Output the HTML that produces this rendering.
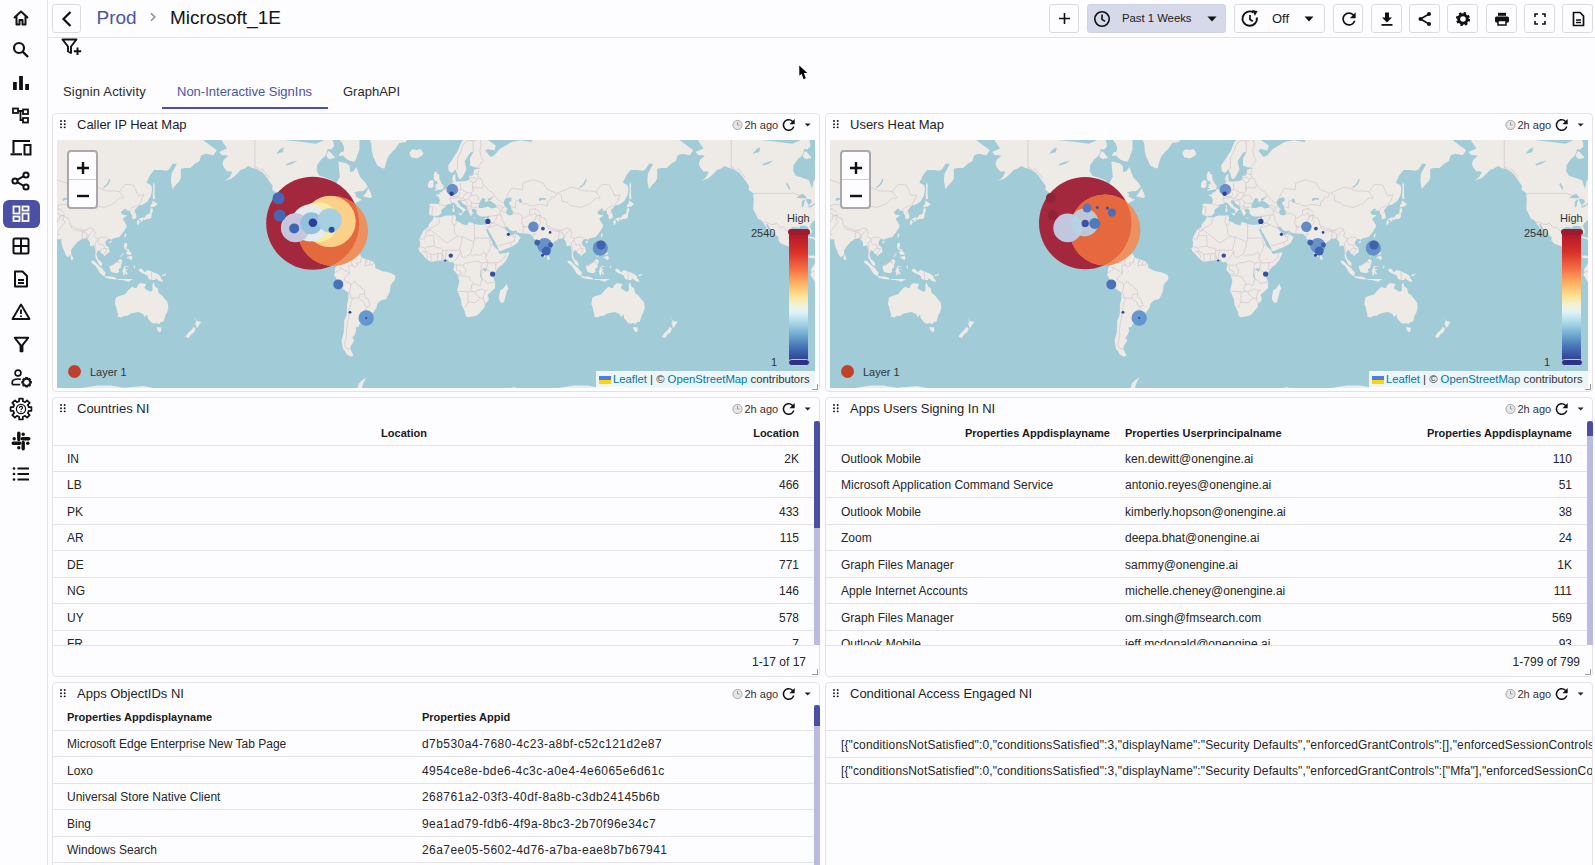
<!DOCTYPE html>
<html><head><meta charset="utf-8">
<style>
*{box-sizing:border-box;margin:0;padding:0}
html,body{width:1595px;height:865px;overflow:hidden;background:#fdfcfe;font-family:"Liberation Sans",sans-serif;color:#1f1f1f}
.a{position:absolute}
.side{left:0;top:0;width:48px;height:865px;border-right:1px solid #e4e3e8;background:#fdfcfe}
.side svg{position:absolute;left:11px;width:20px;height:20px}
.top{left:48px;top:0;width:1547px;height:38px;border-bottom:1px solid #e2e1e6}
.btn{position:absolute;top:4px;height:29px;border:1px solid #dcdbe0;border-radius:3px;background:#fdfcfe}
.btn svg{position:absolute}
.panel{position:absolute;border:1px solid #e3e2e7;border-radius:4px;background:#fdfcff;overflow:hidden}
.ptitle{position:absolute;left:24px;top:6px;font-size:13px;color:#1f1f1f;white-space:nowrap}
.grip{position:absolute;left:8px;top:8px;width:6px;height:9px}
.ago{position:absolute;top:5px;font-size:11px;color:#333;white-space:nowrap}
.map{position:absolute;background:#a2cbd8;overflow:hidden}
.t{position:absolute;font-size:12px;white-space:nowrap;color:#262626}
.th{position:absolute;font-size:11px;font-weight:bold;white-space:nowrap;color:#1a1a1a}
.hl{position:absolute;height:1px;background:#e3e3e6}
</style></head><body>
<svg width="0" height="0" style="position:absolute">
<defs>
<g id="world">
<rect x="0" y="0" width="758" height="248" fill="#a2cbd8"/>
<path d="M-99.3,76.9L-100.2,75.6L-103.7,75.2L-104.5,72.2L-103.5,66.6L-104.2,64.9L-102.5,63.6L-94.3,64.1L-93.5,59.9L-94.8,57.0L-98.3,54.8L-94.0,54.2L-93.6,52.0L-91.6,52.4L-89.8,49.5L-86.6,48.2L-85.5,45.0L-82.6,43.9L-80.5,43.0L-81.2,39.3L-80.5,35.5L-78.0,34.0L-78.0,37.7L-77.5,41.4L-74.0,41.6L-67.4,40.9L-64.1,39.8L-64.1,35.7L-60.8,35.7L-59.5,32.0L-59.5,29.7L-52.2,28.1L-58.8,27.3L-63.4,25.5L-63.4,18.3L-59.5,11.2L-63.4,12.8L-68.7,21.3L-67.0,29.5L-70.1,35.7L-73.0,39.3L-75.0,38.1L-76.3,33.3L-78.0,29.5L-81.3,33.0L-84.6,31.3L-85.3,25.5L-81.3,19.8L-75.4,10.6L-72.0,2.0L-66.8,-3.6L-60.1,-7.5L-53.5,-5.5L-48.2,-1.7L-37.6,5.6L-39.0,10.6L-45.6,8.9L-48.2,10.6L-42.9,16.9L-39.0,15.3L-33.7,8.9L-21.8,2.0L-12.5,0.2L-1.9,2.0L4.7,-11.7L14.0,-16.1L40.4,-36.7L93.4,-11.7L119.8,-1.7L133.1,-3.6L146.3,0.2L159.9,10.3L156.2,15.3L148.9,13.8L144.3,15.3L142.3,21.3L138.4,23.2L133.1,28.1L127.8,28.1L123.8,28.7L123.8,38.1L122.5,40.9L117.8,46.1L115.5,49.3L113.9,40.5L114.5,33.8L119.8,24.1L115.9,23.5L111.9,29.5L109.2,30.8L104.0,30.0L97.3,30.0L93.4,34.5L89.4,42.8L94.0,45.0L95.1,49.3L94.0,55.4L90.7,61.2L86.8,63.9L84.1,65.2L82.6,64.7L79.9,67.5L77.5,70.5L79.5,76.1L79.2,78.2L76.2,79.3L75.2,78.5L75.2,75.2L73.5,73.6L73.5,71.0L68.9,70.2L68.9,71.9L69.8,69.3L68.2,68.6L64.3,71.5L64.0,72.7L65.6,74.7L70.2,75.2L66.9,77.7L65.8,79.3L68.0,82.5L69.4,84.8L69.5,87.1L67.6,90.1L66.2,92.3L64.3,94.5L62.3,96.9L59.0,97.7L56.3,98.6L54.3,99.6L53.7,100.6L53.3,98.9L51.0,98.9L49.0,101.0L48.1,103.1L49.7,105.9L51.7,107.2L52.6,112.0L49.7,114.0L47.1,116.6L46.8,114.3L44.4,113.4L43.7,111.7L41.5,110.0L40.4,111.3L39.4,114.7L40.8,118.7L42.4,120.3L44.9,122.7L45.1,126.3L42.0,124.6L40.8,122.0L38.4,117.4L38.2,110.6L37.4,106.5L36.5,105.3L33.2,106.5L32.8,101.7L30.5,99.6L29.8,98.1L27.2,98.4L24.6,98.7L23.0,100.4L20.6,101.7L16.9,105.9L14.2,110.0L14.2,114.3L12.6,115.8L10.7,117.2L8.7,114.7L7.0,110.6L5.4,106.5L4.4,102.4L4.4,98.9L3.4,99.3L1.4,99.6L-0.6,97.7L0.7,96.9L-1.6,95.8L-3.2,94.1L-7.2,93.4L-10.5,93.5L-15.8,92.6L-17.1,90.6L-20.4,91.3L-23.7,89.7L-25.7,87.1L-27.7,86.4L-28.4,87.1L-27.7,89.4L-25.7,91.6L-24.7,94.1L-23.6,92.6L-23.1,95.3L-19.8,94.8L-17.8,92.3L-17.4,91.8L-17.1,94.5L-14.5,95.8L-12.8,97.4L-14.5,100.3L-15.4,102.4L-19.1,105.2L-23.1,107.2L-28.4,109.3L-32.3,110.9L-34.6,111.1L-35.3,107.9L-38.3,101.7L-40.3,98.9L-41.6,96.0L-43.6,93.1L-45.6,89.4L-45.6,87.1L-46.6,89.4L-47.2,90.1L-48.9,86.4L-49.2,84.4L-46.5,84.4L-45.6,82.0L-44.9,80.4L-44.4,77.2L-44.3,75.6L-46.9,76.4L-49.6,76.5L-52.2,76.4L-54.8,75.6L-55.8,74.4L-57.1,72.7L-56.4,71.0L-57.2,70.0L-58.8,68.6L-61.5,69.3L-61.7,71.0L-60.1,73.6L-61.5,74.2L-62.1,76.1L-63.3,75.4L-63.8,73.6L-65.2,71.0L-66.1,69.3L-66.2,67.0L-67.4,65.8L-69.4,64.3L-71.4,63.0L-72.0,61.2L-73.8,60.0L-75.6,60.6L-75.4,62.7L-73.6,64.5L-72.7,66.6L-70.7,67.5L-68.1,69.1L-67.4,69.8L-69.4,71.5L-70.1,72.7L-71.1,73.6L-71.1,70.2L-73.1,68.8L-75.8,67.0L-78.0,63.9L-80.1,62.3L-82.2,63.6L-85.3,64.3L-87.7,64.9L-87.7,67.0L-90.8,68.8L-92.3,71.0L-91.6,72.4L-93.2,74.2L-94.8,75.7L-97.7,75.7L-99.3,76.9ZM13.7,115.0L14.6,115.1L16.3,118.0L16.0,119.8L14.2,120.0L13.7,117.4ZM68.2,93.4L69.5,93.8L68.2,98.1L67.2,96.7ZM51.8,102.1L54.3,100.8L55.0,101.5L53.0,103.5ZM79.9,80.9L81.5,80.1L82.8,81.7L81.5,84.8L80.1,84.4ZM83.4,81.7L84.1,80.1L86.2,79.8L85.7,81.2ZM81.3,79.6L84.1,80.3L86.8,79.1L87.4,80.6L89.1,79.1L91.8,79.1L93.1,78.5L94.4,77.4L94.6,74.4L94.7,73.1L96.0,71.0L95.2,67.7L93.4,68.9L93.2,71.0L92.7,73.6L90.1,74.7L89.1,74.9L88.1,77.4L84.1,77.7L82.3,78.8ZM93.4,67.5L94.8,67.0L97.7,66.6L100.6,64.3L99.3,63.0L95.6,60.4L95.1,64.3L93.8,64.5ZM96.0,59.3L98.0,58.9L97.5,53.4L97.7,45.0L96.8,42.1L96.0,45.0L96.3,49.3L95.7,54.4ZM67.6,103.1L69.8,103.1L70.2,105.9L68.9,108.6L72.2,109.6L72.2,111.2L70.2,110.4L67.7,109.0L66.9,106.1ZM69.5,118.7L71.5,117.8L72.2,118.7L74.2,120.2L75.5,118.3L74.8,115.4L74.2,116.0L71.5,116.4L70.2,117.4ZM69.5,111.3L72.9,111.3L74.8,113.4L73.5,114.7L70.2,114.7L69.3,112.7ZM63.2,117.0L66.2,112.8L66.6,114.0L63.6,117.4ZM52.3,126.0L53.1,129.3L54.1,132.0L59.6,133.3L62.3,132.0L61.6,129.3L64.3,126.9L64.0,124.7L65.6,121.1L62.9,118.7L60.9,121.4L57.6,123.8L55.0,125.6ZM34.2,120.6L37.1,121.1L41.0,125.1L45.5,128.7L46.4,130.4L48.4,132.0L48.1,135.7L46.4,135.8L43.1,133.3L40.8,129.2L38.4,125.8L34.5,122.8ZM47.3,137.0L49.0,136.0L51.4,136.4L55.0,136.5L57.4,137.3L59.6,138.4L59.6,139.6L53.7,138.9L49.0,137.8ZM60.3,139.0L65.6,138.9L72.2,138.9L76.2,139.0L73.5,140.6L71.5,141.8L65.6,140.0L61.6,140.0ZM66.2,135.3L67.6,135.4L67.6,131.7L68.9,134.4L71.1,134.0L69.5,132.0L68.6,130.4L71.5,129.3L68.2,129.2L68.2,127.3L73.1,126.0L67.6,126.3L66.6,128.0L65.3,131.7L66.0,132.6ZM76.8,125.6L78.1,126.0L77.5,129.1L76.8,128.0ZM81.5,130.0L83.4,128.5L85.4,129.2L87.4,132.2L90.7,130.1L94.7,131.4L100.6,134.1L103.3,136.0L104.0,138.6L106.6,141.7L102.6,141.3L98.7,138.2L98.0,140.0L94.7,140.1L91.8,138.9L90.1,135.3L85.4,133.3L82.8,131.7ZM104.6,135.3L109.2,133.6L108.6,135.3L105.3,136.2ZM96.7,142.2L95.4,144.7L95.5,150.8L93.4,151.7L92.7,151.5L88.1,148.8L87.4,147.8L89.1,144.3L89.0,144.0L83.4,143.1L82.1,144.3L81.2,144.5L79.5,148.1L77.5,148.1L75.5,146.7L74.2,147.4L71.5,150.1L69.5,152.2L68.2,154.3L65.6,155.0L62.3,156.0L59.0,157.6L58.3,161.5L57.9,163.9L59.0,166.6L60.3,172.0L61.2,174.8L60.4,176.5L64.3,177.5L66.9,175.9L70.9,175.7L72.2,174.3L74.8,173.2L81.5,172.0L86.1,174.0L87.8,177.2L90.1,174.3L90.7,178.3L92.7,180.6L94.7,182.9L98.0,183.8L99.3,182.8L101.8,184.3L104.0,182.1L106.6,181.6L108.3,175.6L109.9,172.7L111.4,167.5L110.6,162.2L107.3,158.6L105.3,155.7L101.7,152.9L100.6,148.1L98.0,146.7L96.7,142.2ZM99.5,187.1L104.4,187.4L104.0,191.5L102.4,192.2L100.2,189.7ZM136.6,176.5L139.4,180.4L140.9,181.3L144.3,181.9L142.3,184.6L141.3,186.7L139.4,188.1L139.2,185.5L138.1,184.5L139.2,181.1ZM136.6,186.7L138.6,188.8L137.0,192.6L134.4,193.9L131.7,197.9L128.4,196.7L131.1,193.0L134.7,189.4ZM-330.1,365.4L-330.1,298.8L-303.6,292.7L-290.4,287.0L-277.2,281.7L-263.9,276.8L-224.2,272.1L-191.1,272.1L-184.5,267.7L-173.9,267.7L-171.3,281.7L-151.4,298.8L-131.6,287.0L-111.8,267.7L-91.9,259.6L-72.0,259.6L-52.2,257.7L-39.0,255.8L-25.7,248.7L-19.1,247.1L-12.5,250.4L0.7,252.2L7.4,257.7L20.6,248.7L40.4,245.4L53.7,245.4L66.9,247.7L86.8,246.1L100.0,248.7L119.8,259.6L133.1,265.6L146.3,298.8L146.3,365.4ZM162.2,11.9L170.1,8.6L164.6,0.6L177.0,-8.8L197.9,-2.4L213.8,-3.6L229.7,0.2L245.6,2.0L258.8,3.8L265.4,0.9L272.0,-2.8L275.3,-1.7L276.6,3.1L277.0,6.6L274.0,9.6L270.7,8.9L270.0,12.2L268.0,16.2L264.5,18.9L260.1,25.2L259.8,31.3L262.4,35.7L268.0,37.4L275.6,40.3L278.6,48.7L280.1,41.6L282.9,37.0L281.9,28.1L281.4,21.6L289.2,23.2L292.5,25.5L293.2,32.0L296.5,31.3L299.3,27.1L303.1,37.0L308.4,42.8L310.8,46.7L306.4,51.0L299.8,51.4L296.5,53.0L299.1,53.8L298.5,56.4L303.8,59.3L305.1,59.7L300.5,61.9L297.4,63.8L296.5,61.2L295.6,61.9L291.9,63.6L290.9,65.8L291.9,67.2L289.9,67.9L286.6,69.3L286.4,70.8L285.2,72.5L283.7,75.2L284.6,78.2L282.6,79.3L280.0,81.2L277.3,84.0L276.6,86.4L278.4,90.9L278.1,93.5L277.0,93.5L276.3,91.6L275.1,89.4L274.9,87.1L273.3,86.2L270.7,85.7L266.1,85.9L266.5,87.9L264.1,87.6L259.4,87.1L256.8,88.9L255.9,92.3L255.2,98.1L256.1,100.3L257.5,102.4L259.4,103.5L262.8,102.9L264.1,102.7L264.9,99.8L268.0,98.9L269.5,99.3L268.7,102.4L267.8,105.2L267.4,106.8L270.7,106.7L274.3,107.9L274.0,112.0L273.9,113.6L275.7,115.8L278.0,115.8L279.3,115.2L282.1,116.4L281.3,118.0L278.6,118.3L277.0,117.9L274.7,117.0L271.1,114.8L270.8,112.9L268.7,110.6L266.3,110.0L263.4,109.3L260.8,106.8L259.4,106.3L256.8,107.0L254.2,106.1L250.2,104.5L247.5,103.4L244.9,100.3L245.3,97.3L243.6,96.0L240.9,93.5L239.9,91.6L237.6,89.4L235.6,87.1L234.7,84.8L232.6,83.6L233.4,86.4L235.0,89.1L236.3,91.6L237.6,94.5L239.6,96.7L238.3,96.1L236.3,94.1L235.9,91.6L233.6,89.4L232.3,86.4L230.2,83.6L229.4,82.2L227.7,80.1L224.9,79.1L223.2,76.1L222.4,73.9L220.7,71.0L219.9,69.5L220.1,64.9L220.4,58.7L219.5,54.6L221.5,54.8L219.1,52.4L215.1,49.7L215.8,46.1L212.5,41.6L208.5,35.7L205.2,32.0L202.5,31.0L199.2,28.7L195.3,28.1L191.3,26.0L187.3,28.7L183.4,30.0L180.7,33.3L177.4,36.2L174.5,38.6L170.8,39.8L168.1,40.9L172.8,37.0L175.4,32.0L172.8,31.3L170.1,31.5L166.4,26.8L165.5,23.2L166.8,19.8L171.4,15.9L168.8,15.3L164.8,15.0L162.2,11.9ZM282.1,116.4L283.9,115.2L284.6,113.9L286.6,113.1L289.2,111.6L290.1,113.4L289.5,114.2L290.5,115.6L291.2,112.7L294.5,114.0L299.8,114.0L302.5,113.8L303.8,115.8L304.4,117.0L307.7,119.0L311.7,120.0L315.7,121.4L317.0,122.7L318.3,125.6L318.3,128.0L321.0,129.3L325.6,131.3L330.2,132.0L334.2,133.3L337.9,135.3L338.4,137.4L337.5,140.6L334.9,143.3L333.6,145.4L332.9,151.5L330.9,155.7L328.9,159.3L325.6,159.7L323.0,161.0L320.3,163.7L319.7,167.4L317.0,171.2L313.7,175.9L311.7,177.5L308.4,177.5L309.1,181.6L307.1,183.6L302.5,184.1L301.8,186.7L298.5,187.6L299.1,190.2L297.8,194.8L295.2,197.7L297.4,200.6L293.9,205.7L293.2,208.8L293.9,209.9L296.5,215.5L293.9,216.7L289.9,214.4L287.9,211.0L285.9,208.8L284.6,200.6L286.6,193.0L287.2,185.8L287.2,180.8L289.2,175.9L289.9,172.7L289.9,165.1L291.2,159.3L291.5,155.0L291.2,152.6L288.6,150.8L284.6,148.1L282.6,144.0L280.6,140.6L279.3,138.6L276.9,134.6L278.2,132.4L277.6,130.6L278.6,127.3L280.0,126.0L280.6,124.7L281.9,122.7L282.2,120.0L281.4,118.3L282.1,116.4ZM287.9,-42.8L307.7,-28.3L310.4,-11.7L311.7,-1.7L314.4,3.8L314.6,10.6L316.3,16.9L318.3,21.3L320.3,25.5L324.9,28.1L327.6,28.4L328.7,24.1L330.9,16.9L334.9,11.9L338.2,8.9L342.2,3.1L348.8,2.0L352.7,-3.6L355.4,-7.5L358.0,-25.7L344.8,-56.7L305.1,-56.7ZM352.7,12.2L355.4,9.3L360.0,9.9L363.3,8.9L365.3,11.2L366.5,13.8L364.6,15.9L359.6,18.6L356.0,17.5L354.5,17.5L352.7,14.4ZM302.6,8.6L301.4,12.2L298.7,19.8L297.2,21.8L293.9,21.0L290.5,19.8L285.9,15.6L281.9,15.9L283.3,12.5L286.6,11.6L287.2,7.3L285.2,2.7L281.0,-1.7L278.6,-3.6L268.0,-25.7L302.5,-11.7L302.5,7.3ZM269.4,15.3L271.4,10.9L274.0,12.8L276.6,15.9L278.4,17.8L276.0,18.3L272.7,19.2L270.0,17.2ZM306.0,56.2L309.7,51.8L311.1,48.0L313.7,52.4L314.9,56.4L313.7,57.9L310.7,57.4ZM272.1,98.3L274.7,96.7L277.3,96.4L280.6,97.6L282.6,98.6L286.3,100.7L281.9,101.1L280.6,98.9L277.3,98.3L274.7,97.9ZM286.0,103.2L288.3,101.1L291.9,101.4L294.0,102.9L290.4,104.1L288.6,103.6ZM376.7,77.2L375.5,80.1L371.5,84.8L371.7,87.1L367.0,89.8L364.6,94.5L362.0,99.6L363.1,101.7L362.7,107.2L361.3,108.3L362.3,111.3L364.6,113.4L366.6,115.4L368.6,118.3L373.9,122.0L379.2,121.1L385.8,120.3L390.5,119.6L392.4,122.3L395.7,122.0L397.5,124.0L396.9,127.3L396.4,130.0L400.1,134.0L400.8,136.1L402.4,141.3L401.0,146.7L400.1,150.8L403.7,158.6L404.6,165.1L407.7,171.2L408.8,176.2L411.0,177.2L418.4,175.9L421.6,174.3L425.5,169.6L427.5,167.4L427.9,163.7L431.5,160.7L431.5,157.1L430.4,154.7L432.8,152.9L438.1,148.1L438.2,142.0L436.5,138.6L436.5,134.4L439.4,130.4L442.1,126.9L445.4,124.7L449.3,120.0L452.0,114.2L452.4,112.3L448.0,113.1L442.7,114.0L441.8,112.3L441.0,110.0L437.4,107.0L435.4,103.1L433.7,98.9L431.6,95.4L430.2,92.3L428.2,89.1L427.6,86.4L427.2,84.4L423.5,85.0L417.6,83.9L413.0,81.9L411.1,83.1L410.3,85.6L407.7,84.8L405.0,84.0L402.0,81.9L398.4,80.7L399.1,77.7L398.0,74.9L395.7,75.4L388.5,75.6L383.2,77.4L376.7,77.2ZM449.7,144.0L451.3,148.8L450.0,150.8L448.7,155.7L447.0,162.2L444.1,162.9L442.3,160.0L441.8,157.1L443.3,150.1L446.0,148.8L448.0,146.0ZM377.1,76.9L376.2,75.6L372.7,75.2L371.9,72.2L372.9,66.6L372.2,64.9L373.9,63.6L382.1,64.1L382.9,59.9L381.6,57.0L378.1,54.8L382.4,54.2L382.8,52.0L384.8,52.4L386.6,49.5L389.8,48.2L390.9,45.0L393.8,43.9L395.9,43.0L395.2,39.3L395.9,35.5L398.4,34.0L398.4,37.7L398.9,41.4L402.4,41.6L409.0,40.9L412.3,39.8L412.3,35.7L415.6,35.7L416.9,32.0L416.9,29.7L424.2,28.1L417.6,27.3L413.0,25.5L413.0,18.3L416.9,11.2L413.0,12.8L407.7,21.3L409.4,29.5L406.3,35.7L403.4,39.3L401.4,38.1L400.1,33.3L398.4,29.5L395.1,33.0L391.8,31.3L391.1,25.5L395.1,19.8L401.0,10.6L404.4,2.0L409.6,-3.6L416.3,-7.5L422.9,-5.5L428.2,-1.7L438.8,5.6L437.4,10.6L430.8,8.9L428.2,10.6L433.5,16.9L437.4,15.3L442.7,8.9L454.6,2.0L463.9,0.2L474.5,2.0L481.1,-11.7L490.4,-16.1L516.8,-36.7L569.8,-11.7L596.2,-1.7L609.5,-3.6L622.7,0.2L636.3,10.3L632.6,15.3L625.3,13.8L620.7,15.3L618.7,21.3L614.8,23.2L609.5,28.1L604.2,28.1L600.2,28.7L600.2,38.1L598.9,40.9L594.2,46.1L591.9,49.3L590.3,40.5L590.9,33.8L596.2,24.1L592.3,23.5L588.3,29.5L585.6,30.8L580.4,30.0L573.7,30.0L569.8,34.5L565.8,42.8L570.4,45.0L571.5,49.3L570.4,55.4L567.1,61.2L563.1,63.9L560.5,65.2L559.0,64.7L556.3,67.5L553.9,70.5L555.9,76.1L555.6,78.2L552.6,79.3L551.6,78.5L551.6,75.2L549.9,73.6L549.9,71.0L545.3,70.2L545.3,71.9L546.2,69.3L544.6,68.6L540.7,71.5L540.4,72.7L542.0,74.7L546.6,75.2L543.3,77.7L542.2,79.3L544.4,82.5L545.8,84.8L545.9,87.1L544.0,90.1L542.6,92.3L540.7,94.5L538.7,96.9L535.4,97.7L532.7,98.6L530.7,99.6L530.1,100.6L529.7,98.9L527.4,98.9L525.4,101.0L524.5,103.1L526.1,105.9L528.1,107.2L529.0,112.0L526.1,114.0L523.5,116.6L523.2,114.3L520.8,113.4L520.1,111.7L517.9,110.0L516.8,111.3L515.8,114.7L517.2,118.7L518.8,120.3L521.3,122.7L521.5,126.3L518.4,124.6L517.2,122.0L514.8,117.4L514.6,110.6L513.8,106.5L512.9,105.3L509.6,106.5L509.2,101.7L506.9,99.6L506.2,98.1L503.6,98.4L501.0,98.7L499.4,100.4L497.0,101.7L493.3,105.9L490.6,110.0L490.6,114.3L489.0,115.8L487.1,117.2L485.1,114.7L483.4,110.6L481.8,106.5L480.8,102.4L480.8,98.9L479.8,99.3L477.8,99.6L475.8,97.7L477.1,96.9L474.8,95.8L473.2,94.1L469.2,93.4L465.9,93.5L460.6,92.6L459.3,90.6L456.0,91.3L452.7,89.7L450.7,87.1L448.7,86.4L448.0,87.1L448.7,89.4L450.7,91.6L451.7,94.1L452.8,92.6L453.3,95.3L456.6,94.8L458.6,92.3L459.0,91.8L459.3,94.5L461.9,95.8L463.6,97.4L461.9,100.3L461.0,102.4L457.3,105.2L453.3,107.2L448.0,109.3L444.1,110.9L441.8,111.1L441.1,107.9L438.1,101.7L436.1,98.9L434.8,96.0L432.8,93.1L430.8,89.4L430.8,87.1L429.8,89.4L429.2,90.1L427.5,86.4L427.2,84.4L429.9,84.4L430.8,82.0L431.5,80.4L432.0,77.2L432.1,75.6L429.5,76.4L426.8,76.5L424.2,76.4L421.6,75.6L420.6,74.4L419.3,72.7L420.0,71.0L419.2,70.0L417.6,68.6L414.9,69.3L414.7,71.0L416.3,73.6L414.9,74.2L414.3,76.1L413.1,75.4L412.6,73.6L411.2,71.0L410.3,69.3L410.2,67.0L409.0,65.8L407.0,64.3L405.0,63.0L404.4,61.2L402.6,60.0L400.8,60.6L401.0,62.7L402.8,64.5L403.7,66.6L405.7,67.5L408.3,69.1L409.0,69.8L407.0,71.5L406.3,72.7L405.3,73.6L405.3,70.2L403.3,68.8L400.6,67.0L398.4,63.9L396.3,62.3L394.2,63.6L391.1,64.3L388.7,64.9L388.7,67.0L385.6,68.8L384.1,71.0L384.8,72.4L383.2,74.2L381.6,75.7L378.7,75.7L377.1,76.9ZM377.0,51.2L380.5,50.1L383.2,49.7L386.2,48.9L386.7,45.6L384.8,43.9L384.2,42.3L382.5,39.3L382.1,34.5L381.9,34.0L379.5,34.0L380.4,31.8L377.9,31.8L376.8,34.5L377.2,37.4L376.3,38.1L377.9,40.5L378.0,40.9L380.1,40.9L380.5,42.8L380.5,44.3L378.3,44.3L378.9,46.5L377.5,47.6L380.5,48.4L378.5,49.1ZM376.6,46.7L376.3,43.0L377.1,41.4L375.2,40.0L373.3,40.5L371.3,42.8L370.9,47.2L373.9,48.2ZM400.9,73.6L405.1,73.1L404.4,75.7ZM395.4,68.4L397.5,68.4L397.2,71.9L395.6,71.9ZM395.9,65.0L396.9,65.0L396.8,67.7L396.1,67.5ZM415.6,77.5L419.3,78.0L416.9,78.7ZM427.2,78.5L430.3,77.4L429.5,79.1L427.5,79.0ZM490.1,115.0L491.0,115.1L492.7,118.0L492.4,119.8L490.6,120.0L490.1,117.4ZM544.6,93.4L545.9,93.8L544.6,98.1L543.6,96.7ZM528.2,102.1L530.7,100.8L531.4,101.5L529.4,103.5ZM556.3,80.9L557.9,80.1L559.2,81.7L557.9,84.8L556.5,84.4ZM559.8,81.7L560.5,80.1L562.6,79.8L562.1,81.2ZM557.7,79.6L560.5,80.3L563.1,79.1L563.8,80.6L565.5,79.1L568.2,79.1L569.5,78.5L570.8,77.4L571.0,74.4L571.1,73.1L572.4,71.0L571.6,67.7L569.8,68.9L569.6,71.0L569.1,73.6L566.5,74.7L565.5,74.9L564.5,77.4L560.5,77.7L558.7,78.8ZM569.8,67.5L571.2,67.0L574.1,66.6L577.0,64.3L575.7,63.0L572.0,60.4L571.5,64.3L570.2,64.5ZM572.4,59.3L574.4,58.9L573.9,53.4L574.1,45.0L573.2,42.1L572.4,45.0L572.7,49.3L572.1,54.4ZM544.0,103.1L546.2,103.1L546.6,105.9L545.3,108.6L548.6,109.6L548.6,111.2L546.6,110.4L544.1,109.0L543.3,106.1ZM545.9,118.7L547.9,117.8L548.6,118.7L550.6,120.2L551.9,118.3L551.2,115.4L550.6,116.0L547.9,116.4L546.6,117.4ZM545.9,111.3L549.3,111.3L551.2,113.4L549.9,114.7L546.6,114.7L545.7,112.7ZM539.6,117.0L542.6,112.8L543.0,114.0L540.0,117.4ZM528.7,126.0L529.5,129.3L530.5,132.0L536.0,133.3L538.7,132.0L538.0,129.3L540.7,126.9L540.4,124.7L542.0,121.1L539.3,118.7L537.3,121.4L534.0,123.8L531.4,125.6ZM510.6,120.6L513.5,121.1L517.4,125.1L521.9,128.7L522.8,130.4L524.8,132.0L524.5,135.7L522.8,135.8L519.5,133.3L517.2,129.2L514.8,125.8L510.9,122.8ZM523.7,137.0L525.4,136.0L527.8,136.4L531.4,136.5L533.8,137.3L536.0,138.4L536.0,139.6L530.1,138.9L525.4,137.8ZM536.7,139.0L542.0,138.9L548.6,138.9L552.6,139.0L549.9,140.6L547.9,141.8L542.0,140.0L538.0,140.0ZM542.6,135.3L544.0,135.4L544.0,131.7L545.3,134.4L547.5,134.0L545.9,132.0L545.0,130.4L547.9,129.3L544.6,129.2L544.6,127.3L549.5,126.0L544.0,126.3L543.0,128.0L541.7,131.7L542.4,132.6ZM553.2,125.6L554.5,126.0L553.9,129.1L553.2,128.0ZM557.9,130.0L559.8,128.5L561.8,129.2L563.8,132.2L567.1,130.1L571.1,131.4L577.0,134.1L579.7,136.0L580.4,138.6L583.0,141.7L579.0,141.3L575.1,138.2L574.4,140.0L571.1,140.1L568.2,138.9L566.5,135.3L561.8,133.3L559.2,131.7ZM581.0,135.3L585.6,133.6L585.0,135.3L581.7,136.2ZM573.1,142.2L571.8,144.7L571.9,150.8L569.8,151.7L569.1,151.5L564.5,148.8L563.8,147.8L565.5,144.3L565.4,144.0L559.8,143.1L558.5,144.3L557.6,144.5L555.9,148.1L553.9,148.1L551.9,146.7L550.6,147.4L547.9,150.1L545.9,152.2L544.6,154.3L542.0,155.0L538.7,156.0L535.4,157.6L534.7,161.5L534.3,163.9L535.4,166.6L536.7,172.0L537.6,174.8L536.8,176.5L540.7,177.5L543.3,175.9L547.3,175.7L548.6,174.3L551.2,173.2L557.9,172.0L562.5,174.0L564.2,177.2L566.5,174.3L567.1,178.3L569.1,180.6L571.1,182.9L574.4,183.8L575.7,182.8L578.2,184.3L580.4,182.1L583.0,181.6L584.7,175.6L586.3,172.7L587.8,167.5L587.0,162.2L583.7,158.6L581.7,155.7L578.1,152.9L577.0,148.1L574.4,146.7L573.1,142.2ZM575.9,187.1L580.8,187.4L580.4,191.5L578.8,192.2L576.6,189.7ZM613.0,176.5L615.8,180.4L617.3,181.3L620.7,181.9L618.7,184.6L617.7,186.7L615.8,188.1L615.6,185.5L614.5,184.5L615.6,181.1ZM613.0,186.7L615.0,188.8L613.4,192.6L610.8,193.9L608.1,197.9L604.8,196.7L607.5,193.0L611.1,189.4ZM309.7,236.8L307.1,239.1L304.4,240.7L301.8,243.8L299.8,250.4L297.2,255.8L291.9,267.7L305.1,267.7L303.8,252.2L306.4,242.9ZM146.3,365.4L146.3,298.8L172.8,292.7L186.0,287.0L199.2,281.7L212.5,276.8L252.2,272.1L285.2,272.1L291.9,267.7L302.5,267.7L305.1,281.7L324.9,298.8L344.8,287.0L364.6,267.7L384.5,259.6L404.4,259.6L424.2,257.7L437.4,255.8L450.7,248.7L457.3,247.1L463.9,250.4L477.1,252.2L483.8,257.7L497.0,248.7L516.8,245.4L530.1,245.4L543.3,247.7L563.1,246.1L576.4,248.7L596.2,259.6L609.5,265.6L622.7,298.8L622.7,365.4ZM638.6,11.9L646.5,8.6L641.0,0.6L653.4,-8.8L674.3,-2.4L690.2,-3.6L706.1,0.2L722.0,2.0L735.2,3.8L741.8,0.9L748.4,-2.8L751.7,-1.7L753.0,3.1L753.4,6.6L750.4,9.6L747.1,8.9L746.4,12.2L744.4,16.2L740.9,18.9L736.5,25.2L736.2,31.3L738.8,35.7L744.4,37.4L752.0,40.3L755.0,48.7L756.5,41.6L759.3,37.0L758.3,28.1L757.8,21.6L765.6,23.2L768.9,25.5L769.6,32.0L772.9,31.3L775.7,27.1L779.5,37.0L784.8,42.8L787.2,46.7L782.8,51.0L776.2,51.4L772.9,53.0L775.5,53.8L774.9,56.4L780.2,59.3L781.5,59.7L776.9,61.9L773.8,63.8L772.9,61.2L772.0,61.9L768.3,63.6L767.3,65.8L768.3,67.2L766.3,67.9L763.0,69.3L762.8,70.8L761.6,72.5L760.1,75.2L761.0,78.2L759.0,79.3L756.4,81.2L753.7,84.0L753.0,86.4L754.8,90.9L754.5,93.5L753.4,93.5L752.7,91.6L751.5,89.4L751.3,87.1L749.7,86.2L747.1,85.7L742.5,85.9L742.9,87.9L740.5,87.6L735.8,87.1L733.2,88.9L732.3,92.3L731.6,98.1L732.5,100.3L733.9,102.4L735.8,103.5L739.2,102.9L740.5,102.7L741.3,99.8L744.4,98.9L745.9,99.3L745.1,102.4L744.2,105.2L743.8,106.8L747.1,106.7L750.7,107.9L750.4,112.0L750.3,113.6L752.1,115.8L754.4,115.8L755.7,115.2L758.5,116.4L757.7,118.0L755.0,118.3L753.4,117.9L751.1,117.0L747.5,114.8L747.2,112.9L745.1,110.6L742.7,110.0L739.8,109.3L737.2,106.8L735.8,106.3L733.2,107.0L730.6,106.1L726.6,104.5L723.9,103.4L721.3,100.3L721.7,97.3L720.0,96.0L717.3,93.5L716.3,91.6L714.0,89.4L712.0,87.1L711.1,84.8L709.0,83.6L709.8,86.4L711.4,89.1L712.7,91.6L714.0,94.5L716.0,96.7L714.7,96.1L712.7,94.1L712.3,91.6L710.0,89.4L708.7,86.4L706.6,83.6L705.8,82.2L704.1,80.1L701.3,79.1L699.6,76.1L698.8,73.9L697.1,71.0L696.3,69.5L696.5,64.9L696.8,58.7L695.9,54.6L697.9,54.8L695.5,52.4L691.5,49.7L692.2,46.1L688.9,41.6L684.9,35.7L681.6,32.0L678.9,31.0L675.6,28.7L671.7,28.1L667.7,26.0L663.7,28.7L659.8,30.0L657.1,33.3L653.8,36.2L650.9,38.6L647.2,39.8L644.5,40.9L649.2,37.0L651.8,32.0L649.2,31.3L646.5,31.5L642.8,26.8L641.9,23.2L643.2,19.8L647.8,15.9L645.2,15.3L641.2,15.0L638.6,11.9ZM758.5,116.4L760.3,115.2L761.0,113.9L763.0,113.1L765.6,111.6L766.5,113.4L765.9,114.2L766.9,115.6L767.6,112.7L770.9,114.0L776.2,114.0L778.9,113.8L780.2,115.8L780.8,117.0L784.1,119.0L788.1,120.0L792.1,121.4L793.4,122.7L794.7,125.6L794.7,128.0L797.4,129.3L802.0,131.3L806.6,132.0L810.6,133.3L814.3,135.3L814.8,137.4L813.9,140.6L811.3,143.3L810.0,145.4L809.3,151.5L807.3,155.7L805.3,159.3L802.0,159.7L799.4,161.0L796.7,163.7L796.1,167.4L793.4,171.2L790.1,175.9L788.1,177.5L784.8,177.5L785.5,181.6L783.5,183.6L778.9,184.1L778.2,186.7L774.9,187.6L775.5,190.2L774.2,194.8L771.6,197.7L773.8,200.6L770.3,205.7L769.6,208.8L770.3,209.9L772.9,215.5L770.3,216.7L766.3,214.4L764.3,211.0L762.3,208.8L761.0,200.6L763.0,193.0L763.6,185.8L763.6,180.8L765.6,175.9L766.3,172.7L766.3,165.1L767.6,159.3L767.9,155.0L767.6,152.6L765.0,150.8L761.0,148.1L759.0,144.0L757.0,140.6L755.7,138.6L753.3,134.6L754.6,132.4L754.0,130.6L755.0,127.3L756.4,126.0L757.0,124.7L758.3,122.7L758.6,120.0L757.8,118.3L758.5,116.4ZM764.3,-42.8L784.1,-28.3L786.8,-11.7L788.1,-1.7L790.8,3.8L791.0,10.6L792.7,16.9L794.7,21.3L796.7,25.5L801.3,28.1L804.0,28.4L805.1,24.1L807.3,16.9L811.3,11.9L814.6,8.9L818.6,3.1L825.2,2.0L829.1,-3.6L831.8,-7.5L834.4,-25.7L821.2,-56.7L781.5,-56.7ZM779.0,8.6L777.8,12.2L775.1,19.8L773.6,21.8L770.3,21.0L766.9,19.8L762.3,15.6L758.3,15.9L759.7,12.5L763.0,11.6L763.6,7.3L761.6,2.7L757.4,-1.7L755.0,-3.6L744.4,-25.7L778.9,-11.7L778.9,7.3ZM745.8,15.3L747.8,10.9L750.4,12.8L753.0,15.9L754.8,17.8L752.4,18.3L749.1,19.2L746.4,17.2ZM748.5,98.3L751.1,96.7L753.7,96.4L757.0,97.6L759.0,98.6L762.7,100.7L758.3,101.1L757.0,98.9L753.7,98.3L751.1,97.9ZM762.4,103.2L764.7,101.1L768.3,101.4L770.4,102.9L766.8,104.1L765.0,103.6ZM622.7,365.4L622.7,298.8L649.2,292.7L662.4,287.0L675.6,281.7L688.9,276.8L728.6,272.1L761.6,272.1L768.3,267.7L778.9,267.7L781.5,281.7L801.3,298.8L821.2,287.0L841.0,267.7L860.9,259.6L880.8,259.6L900.6,257.7L913.8,255.8L927.1,248.7L933.7,247.1L940.3,250.4L953.5,252.2L960.1,257.7L973.4,248.7L993.2,245.4L1006.5,245.4L1019.7,247.7L1039.5,246.1L1052.8,248.7L1072.6,259.6L1085.9,265.6L1099.1,298.8L1099.1,365.4Z" fill="#eeebe6"/>
<path d="M-27.1,58.3L-25.7,54.4L-21.8,48.2L-11.2,49.7L-10.5,42.8L-0.6,39.8L9.3,42.8L14.0,49.7L23.2,53.2M-21.8,66.6L-17.8,67.9L-17.8,61.2L-14.5,60.2L-11.2,62.3L-9.9,63.9L-6.5,63.6L-4.6,65.2L0.7,66.1L2.1,65.2L6.0,64.3L14.0,65.8M-20.7,71.0L-19.1,73.7L-16.1,73.2L-11.8,75.2L-10.9,77.5L-9.5,78.2L-6.5,76.4L-3.9,74.6L-1.9,75.2L1.4,72.9L2.7,75.4L7.2,74.9M-3.9,74.6L-3.9,70.2L-0.6,68.9L2.1,69.6L1.4,68.1L5.4,71.0L6.7,72.5M-11.3,86.5L-4.6,87.0L-3.9,84.0L-0.2,83.4L0.7,80.4L2.3,79.5L2.3,76.7L7.2,74.9M7.2,74.9L8.0,77.7L11.1,77.7L13.3,82.5L12.6,84.4L15.3,86.0L17.3,87.1L19.3,88.6L24.6,89.5L25.6,90.4L29.8,89.8L33.2,87.9L36.5,88.9M36.5,88.9L38.4,93.1L37.1,95.6L39.1,98.0L41.8,98.6L43.1,97.4L48.4,97.0L50.9,98.9M6.7,75.2L6.0,79.0L8.0,82.5L6.7,84.0L2.1,89.4L1.1,90.6L0.1,92.3L2.1,94.5L-0.9,95.1M14.0,85.6L14.6,88.2L19.3,90.3L24.6,91.6L24.8,90.0M24.8,91.6L26.9,91.0L29.8,90.6M25.2,98.1L25.6,91.9L30.2,93.5L30.2,99.1M30.5,99.3L31.8,95.3L33.6,92.9L36.5,89.7M24.3,53.0L28.5,51.2L37.8,47.2L43.1,48.2L49.7,51.0L59.0,51.0L62.3,51.8L66.9,57.4L65.6,58.3L62.9,57.9L55.7,64.1L47.1,67.4L36.5,65.4L34.2,62.7L28.5,61.2L27.9,55.8L24.3,53.0M14.0,65.8L14.4,61.2L17.3,60.2L17.9,57.0L21.2,57.4L23.6,53.2M62.3,51.8L68.2,44.3L76.2,45.0L81.5,56.0L86.8,54.8L84.1,61.2L81.5,64.9M72.7,70.2L74.8,67.7L78.8,65.9L80.9,65.9M76.2,73.2L78.1,72.7M41.8,98.6L40.6,100.4L42.3,104.5L46.8,104.9L47.7,108.5L50.4,108.6L47.1,114.0M40.6,100.4L37.8,103.1L38.7,106.5L38.8,114.0M43.7,111.7L44.1,109.3L47.7,108.5M40.8,119.4L43.1,120.0L44.8,122.0M53.1,125.4L56.3,124.0L59.6,121.8L60.9,122.4L63.6,122.4M94.6,131.4L94.7,140.1M221.3,53.4L258.5,53.4L258.5,52.6L265.9,55.4L272.3,57.6L275.5,60.6L275.3,66.6L280.0,64.9L283.5,62.7L285.6,61.2L289.9,61.2L291.9,57.9L292.9,56.6L294.8,57.4L294.8,60.0L295.8,61.5M197.9,-2.4L197.9,27.3L200.6,28.1L202.5,30.8L205.2,28.7L207.8,32.3L212.5,38.4M229.5,82.5L232.7,82.2L237.6,84.4L241.3,84.4L241.3,83.6L243.6,83.6L246.2,87.0L248.2,87.9L250.3,86.7L252.8,90.1L255.9,92.5M262.5,108.6L262.5,104.1L266.6,104.1L267.6,103.1M266.5,106.7L266.5,108.9L268.7,110.4M266.7,103.9L266.5,106.7L268.0,107.2M269.0,110.6L272.0,109.3L274.4,107.9M271.1,113.4L273.9,113.5M274.8,117.4L275.2,115.2M282.1,118.0L282.3,116.7M289.2,112.0L288.6,113.4L287.9,115.8L289.0,118.2L291.9,119.0L295.2,119.8L294.5,122.7L295.8,126.0L295.4,125.1L291.9,125.4L291.9,128.3L292.5,133.7M304.4,117.0L303.8,120.0L303.8,122.4L301.1,123.0L299.1,122.7L300.5,125.1L297.8,126.9L295.8,126.0M309.1,120.0L307.7,125.6L311.7,125.1L315.7,125.1L316.3,122.4M313.0,120.4L312.4,125.0M309.1,120.0L310.4,122.7M292.5,133.7L287.9,137.3L287.2,140.0L288.8,141.3L291.1,142.6L292.4,142.6L293.6,144.8L293.5,148.1L292.5,151.5M292.5,133.7L289.2,131.2L284.6,128.3L281.5,126.9M284.6,128.3L280.6,131.3L278.2,132.5M292.5,151.5L291.3,152.6M292.5,151.5L293.9,157.9L295.8,159.3L294.2,161.5L293.9,165.1L292.5,168.1L291.9,174.3L291.2,179.1L290.5,182.4L289.5,189.4L289.7,194.8L288.6,200.6L287.6,204.6L288.8,207.8L293.2,209.5M293.6,144.8L297.8,141.3L299.8,144.7L303.1,146.0L304.8,148.8L307.5,149.9L307.7,154.3L308.0,157.9L310.7,158.3L312.2,163.1L313.0,165.6L310.7,166.6L308.4,170.0L310.7,171.0L313.7,175.4M293.9,157.9L298.5,157.9L301.8,158.1L303.8,160.0L307.1,162.2L307.7,165.6L310.7,166.6M301.8,158.1L302.7,154.3L306.4,154.0L307.7,154.3M307.2,175.1L308.0,170.4M382.1,78.5L382.3,83.0L379.6,85.3L373.0,88.3L373.0,89.8L367.0,89.8M373.0,89.8L378.1,93.8L386.1,100.0L388.9,102.4L390.1,102.1L392.2,101.8L400.4,96.0L403.0,97.3L405.0,96.7M362.0,99.0L367.3,99.0L367.3,96.7L368.6,96.0L368.6,92.3L373.0,90.4M368.6,96.0L376.6,95.3L377.2,105.9L369.3,107.2L368.2,108.2L362.7,106.3M395.7,75.4L395.5,79.1L394.4,80.9L397.1,86.0L397.7,93.8L400.4,96.0M399.7,81.5L397.7,85.6M417.6,83.9L417.6,101.0L416.3,101.7L416.3,107.1L414.3,109.3L414.3,111.2L413.6,113.6L415.6,116.4L417.6,114.2L420.2,115.2L424.2,114.7L427.5,112.0L428.4,114.0L429.8,116.6L428.2,117.6L430.8,121.4L429.5,122.4L432.0,121.9M417.6,98.1L433.3,98.1M433.3,98.1L432.8,102.4L433.9,105.2L435.4,103.8L437.4,107.0M432.8,108.9L433.9,105.2M432.8,108.9L432.1,111.2L429.9,113.9L429.8,116.6M405.0,96.7L416.3,101.7M405.0,96.7L405.0,100.3L402.5,109.3L403.7,110.9L404.2,116.0L406.7,117.9L409.6,116.2L413.6,113.6M402.5,109.3L400.8,110.4L389.8,110.0L389.1,112.4L388.1,119.6M389.8,110.0L385.8,110.6L384.8,108.2L379.2,107.6L377.2,105.9M385.8,110.6L385.2,113.4L380.8,113.4L377.2,114.2L373.6,114.2L369.3,111.5L368.2,108.2M373.6,114.2L374.3,122.2M380.8,113.4L380.3,121.2M385.2,113.4L384.8,120.0M386.6,119.8L385.7,113.4M369.3,118.7L371.0,116.7L370.3,115.2L367.0,111.6M364.6,112.0L369.3,111.5M395.7,121.9L399.1,119.4L402.6,113.6L403.7,110.9M397.5,125.1L399.5,125.1L405.7,125.1L409.0,123.0L414.3,122.4L418.2,121.1L420.9,121.4L425.5,123.1L429.5,122.4M399.5,125.1L399.3,130.0L403.0,131.2L404.4,133.7L400.5,134.6M405.7,125.1L409.0,130.0L407.8,133.6L405.9,135.7L400.8,136.1M405.9,135.7L412.3,137.0L413.6,140.6L416.3,142.6L414.9,144.8L418.9,143.9L422.9,145.9L424.9,139.3M424.9,139.3L423.3,134.0L423.7,129.9L425.0,129.5L423.8,126.3L425.5,123.1M425.0,129.5L429.5,129.3L434.3,132.5L436.4,134.1M429.5,129.3L430.8,123.1L439.4,122.7M438.8,130.2L438.8,123.1L442.7,121.9L448.0,117.4L448.7,113.1M423.7,129.9L424.9,131.7L425.0,133.7M424.9,139.3L428.2,140.6L430.3,143.3L438.1,142.0M400.4,151.2L411.0,151.9L415.3,151.5L417.6,151.9L424.5,148.9L428.2,150.8M411.0,151.9L411.0,157.9L411.0,161.9L408.1,167.7M417.6,151.9L420.2,155.7L423.5,158.1L426.2,158.1M411.0,161.9L418.4,162.9L420.6,160.0L423.5,158.1M427.9,163.7L426.2,158.1L428.2,150.8L431.1,149.9M414.9,144.8L413.6,149.9L416.3,151.5M382.1,64.1L388.7,65.9M372.7,66.6L376.2,67.2L375.2,71.9L374.7,74.9M387.8,49.1L390.1,51.6L392.6,52.4L395.4,53.4L394.6,56.2L392.4,58.7L393.8,59.5L394.4,63.4M392.6,52.4L392.4,49.7L393.6,47.4L393.8,43.9M389.0,48.4L392.4,49.7M395.9,40.7L397.6,40.9M403.3,43.0L403.8,49.5L400.6,50.7L402.8,54.0L401.7,56.4L397.2,56.4L394.6,56.2M397.2,56.4L398.4,58.3L401.0,57.4L402.6,58.3L405.7,58.1L407.0,55.4L409.4,52.4L414.3,53.2L416.3,50.3L415.6,47.2L415.6,43.0L414.3,41.4L412.6,40.0M403.8,49.5L407.0,50.5L409.4,52.4M405.7,58.1L407.0,59.5L409.6,59.5L411.4,58.9L413.6,55.8L414.3,53.2M413.6,55.8L416.9,55.6L419.7,54.8L421.8,58.3L421.8,60.4M411.4,58.9L414.3,62.1L417.6,63.6L422.2,63.4M414.3,62.1L414.1,66.1L414.8,67.9L419.3,67.2L421.6,66.6M410.2,67.0L411.6,66.1L414.1,66.1M411.2,71.0L412.3,68.8L414.8,67.9M402.6,60.0L405.0,60.2L409.6,61.2L410.2,63.9L409.0,65.8M415.6,43.0L418.2,42.3L419.7,39.1L421.8,38.1L424.2,38.6L426.6,45.0L429.5,47.6L431.5,50.5L434.8,51.8L437.4,55.4L435.1,57.4M415.6,47.2L417.6,47.6L424.9,48.2L426.6,45.0M416.3,50.3L416.3,48.0M412.3,38.1L417.6,37.7L419.7,39.1M412.6,34.5L417.6,33.5L420.9,34.5M420.9,34.5L421.8,29.7M421.8,38.1L420.9,34.5M421.6,-1.7L423.5,0.2L424.2,4.9L422.9,10.6L424.2,17.5L426.2,20.4L421.3,26.8M416.0,0.9L418.2,0.6L421.6,-1.7M416.0,0.9L412.3,0.2L408.3,2.0L405.7,5.6L403.7,12.2L400.6,17.5L400.4,25.5L400.1,30.2M416.3,10.9L416.0,0.9M392.6,59.5L393.8,58.3L398.4,58.3M437.4,55.4L441.4,60.2L448.0,63.9L446.7,68.1M439.6,65.8L442.1,65.2L446.0,67.9L443.8,70.7L442.1,68.1L439.6,67.5M443.8,70.7L447.9,72.4L449.2,72.9M442.7,70.7L443.8,74.9L440.5,74.9L437.4,75.6L432.8,76.4M443.8,74.9L445.2,78.5L444.7,80.1L447.6,84.0L448.0,86.4M440.5,74.9L439.0,79.3L436.1,82.8L440.1,84.7L446.0,87.6L448.0,87.1M436.1,82.8L433.3,82.6L432.0,80.7M436.1,82.8L433.5,84.0L432.1,87.1L430.8,87.1M440.1,84.7L432.8,87.6M446.0,87.6L448.7,89.4L450.7,91.6M432.1,87.1L430.7,87.1M452.8,95.3L457.9,97.1L457.3,101.0L453.3,102.4L448.7,103.8L446.0,104.8L441.4,105.6M457.9,97.1L458.6,94.0L459.0,91.8M453.3,102.4L454.6,105.6M449.3,58.3L450.7,54.4L454.6,48.2L465.2,49.7L465.9,42.8L475.8,39.8L485.7,42.8L490.4,49.7L499.6,53.2M454.6,66.6L458.6,67.9L458.6,61.2L461.9,60.2L465.2,62.3L466.5,63.9L469.9,63.6L471.8,65.2L477.1,66.1L478.5,65.2L482.4,64.3L490.4,65.8M455.7,71.0L457.3,73.7L460.3,73.2L464.6,75.2L465.5,77.5L466.9,78.2L469.9,76.4L472.5,74.6L474.5,75.2L477.8,72.9L479.1,75.4L483.6,74.9M472.5,74.6L472.5,70.2L475.8,68.9L478.5,69.6L477.8,68.1L481.8,71.0L483.1,72.5M465.5,77.5L464.7,80.9L465.1,84.0L466.3,84.8L466.0,86.5L468.4,87.1L466.3,89.1L465.9,93.5M465.1,86.5L471.8,87.0L472.5,84.0L476.2,83.4L477.1,80.4L478.7,79.5L478.7,76.7L483.6,74.9M483.6,74.9L484.4,77.7L487.5,77.7L489.7,82.5L489.0,84.4L491.7,86.0L493.7,87.1L495.7,88.6L501.0,89.5L502.0,90.4L506.2,89.8L509.6,87.9L512.9,88.9M512.9,88.9L514.8,93.1L513.5,95.6L515.5,98.0L518.2,98.6L519.5,97.4L524.8,97.0L527.3,98.9M483.1,75.2L482.4,79.0L484.4,82.5L483.1,84.0L478.5,89.4L477.5,90.6L476.5,92.3L478.5,94.5L475.5,95.1M490.4,85.6L491.0,88.2L495.7,90.3L501.0,91.6L501.2,90.0M501.2,91.6L503.3,91.0L506.2,90.6M501.6,98.1L502.0,91.9L506.6,93.5L506.6,99.1M506.9,99.3L508.2,95.3L510.0,92.9L512.9,89.7M500.7,53.0L504.9,51.2L514.2,47.2L519.5,48.2L526.1,51.0L535.4,51.0L538.7,51.8L543.3,57.4L542.0,58.3L539.3,57.9L532.1,64.1L523.5,67.4L512.9,65.4L510.6,62.7L504.9,61.2L504.3,55.8L500.7,53.0M490.4,65.8L490.8,61.2L493.7,60.2L494.3,57.0L497.6,57.4L500.0,53.2M538.7,51.8L544.6,44.3L552.6,45.0L557.9,56.0L563.1,54.8L560.5,61.2L557.9,64.9M549.1,70.2L551.2,67.7L555.2,65.9L557.3,65.9M552.6,73.2L554.5,72.7M518.2,98.6L517.0,100.4L518.7,104.5L523.2,104.9L524.1,108.5L526.8,108.6L523.5,114.0M517.0,100.4L514.2,103.1L515.1,106.5L515.2,114.0M520.1,111.7L520.5,109.3L524.1,108.5M517.2,119.4L519.5,120.0L521.2,122.0M529.5,125.4L532.7,124.0L536.0,121.8L537.3,122.4L540.0,122.4M571.0,131.4L571.1,140.1M697.7,53.4L734.9,53.4L734.9,52.6L742.3,55.4L748.7,57.6L751.9,60.6L751.7,66.6L756.4,64.9L759.9,62.7L762.0,61.2L766.3,61.2L768.3,57.9L769.3,56.6L771.2,57.4L771.2,60.0L772.2,61.5M674.3,-2.4L674.3,27.3L677.0,28.1L678.9,30.8L681.6,28.7L684.2,32.3L688.9,38.4M705.9,82.5L709.1,82.2L714.0,84.4L717.7,84.4L717.7,83.6L720.0,83.6L722.6,87.0L724.6,87.9L726.7,86.7L729.2,90.1L732.3,92.5M738.9,108.6L738.9,104.1L743.0,104.1L744.0,103.1M742.9,106.7L742.9,108.9L745.1,110.4M743.1,103.9L742.9,106.7L744.4,107.2M745.4,110.6L748.4,109.3L750.8,107.9M747.5,113.4L750.3,113.5M751.2,117.4L751.6,115.2M758.5,118.0L758.7,116.7M765.6,112.0L765.0,113.4L764.3,115.8L765.4,118.2L768.3,119.0L771.6,119.8L770.9,122.7L772.2,126.0L771.8,125.1L768.3,125.4L768.3,128.3L768.9,133.7M768.9,133.7L764.3,137.3L763.6,140.0L765.2,141.3L767.5,142.6L768.8,142.6L770.0,144.8L769.9,148.1L768.9,151.5M768.9,133.7L765.6,131.2L761.0,128.3L757.9,126.9M761.0,128.3L757.0,131.3L754.6,132.5M768.9,151.5L770.3,157.9L772.2,159.3L770.6,161.5L770.3,165.1L768.9,168.1L768.3,174.3L767.6,179.1L766.9,182.4L765.9,189.4L766.1,194.8L765.0,200.6L764.0,204.6L765.2,207.8L769.6,209.5" fill="none" stroke="#d3c3d0" stroke-width="0.7"/>
<path d="M5.4,58.9L7.4,57.7L12.6,58.3L12.6,59.7L8.7,59.7L6.0,61.2ZM45.7,47.8L47.7,47.4L51.7,43.9L53.4,39.3L52.7,38.6L49.7,43.9L46.4,46.7ZM262.6,57.9L265.4,58.1L268.7,58.3L272.7,58.3L272.3,56.4L270.0,54.0L267.4,54.4L266.1,55.4ZM268.3,66.6L269.0,67.4L270.2,66.3L270.7,63.0L272.0,59.7L270.0,59.7L268.4,61.9ZM272.4,59.5L274.0,59.1L277.3,59.3L278.6,62.1L275.5,64.9L274.0,63.0L272.7,60.2ZM274.1,67.2L277.3,65.8L280.0,65.0L279.7,65.9L276.6,67.5ZM278.9,64.3L282.6,63.0L283.7,63.9L280.0,64.5ZM256.1,50.3L256.8,48.2L254.2,42.8L252.8,43.9L255.5,49.3ZM229.7,25.5L235.0,24.1L240.3,20.4L235.0,21.8L229.0,24.1ZM219.1,13.8L225.7,12.2L227.0,7.3L223.1,8.9ZM421.6,68.1L422.9,68.1L426.2,68.1L430.8,66.6L434.8,68.4L439.4,67.5L439.6,65.8L436.8,63.0L434.8,61.9L432.8,60.8L430.8,61.2L428.8,62.1L427.6,60.6L428.8,59.3L426.2,58.1L425.1,58.3L423.9,60.2L422.5,62.7L421.6,64.9L421.6,67.0ZM430.8,60.6L432.8,60.4L435.4,57.9L436.4,57.0L434.1,57.4L431.2,58.7ZM446.7,62.1L448.0,59.3L450.0,58.1L452.7,57.4L454.6,57.9L454.4,61.2L452.0,62.1L452.4,64.5L454.2,66.6L454.4,69.3L455.7,71.0L455.8,74.7L452.7,75.6L450.0,74.4L449.2,72.7L449.7,69.6L451.1,69.6L448.7,67.0L447.4,64.9ZM461.9,59.3L463.9,58.3L465.2,61.2L463.9,63.0L461.9,62.1ZM481.8,58.9L483.8,57.7L489.0,58.3L489.0,59.7L485.1,59.7L482.4,61.2ZM522.1,47.8L524.1,47.4L528.1,43.9L529.8,39.3L529.1,38.6L526.1,43.9L522.8,46.7ZM426.2,128.3L429.5,128.4L429.5,130.6L428.2,132.0L426.4,130.0ZM423.1,132.4L424.2,134.0L425.5,139.3L425.0,139.4L423.5,136.6ZM739.0,57.9L741.8,58.1L745.1,58.3L749.1,58.3L748.7,56.4L746.4,54.0L743.8,54.4L742.5,55.4ZM744.7,66.6L745.4,67.4L746.6,66.3L747.1,63.0L748.4,59.7L746.4,59.7L744.8,61.9ZM748.8,59.5L750.4,59.1L753.7,59.3L755.0,62.1L751.9,64.9L750.4,63.0L749.1,60.2ZM750.5,67.2L753.7,65.8L756.4,65.0L756.1,65.9L753.0,67.5ZM755.3,64.3L759.0,63.0L760.1,63.9L756.4,64.5ZM732.5,50.3L733.2,48.2L730.6,42.8L729.2,43.9L731.9,49.3ZM706.1,25.5L711.4,24.1L716.7,20.4L711.4,21.8L705.4,24.1ZM695.5,13.8L702.1,12.2L703.4,7.3L699.5,8.9Z" fill="#a2cbd8"/>
</g>
<symbol id="grip" viewBox="0 0 6 8.5"><circle cx="1" cy="1" r="0.95"/><circle cx="4.7" cy="1" r="0.95"/><circle cx="1" cy="4.2" r="0.95"/><circle cx="4.7" cy="4.2" r="0.95"/><circle cx="1" cy="7.4" r="0.95"/><circle cx="4.7" cy="7.4" r="0.95"/></symbol>
<symbol id="ago" viewBox="0 0 80 18">
<circle cx="5.5" cy="9" r="4.6" fill="#e6e6e8" stroke="#a0a0a0" stroke-width="0.9"/><path d="M5.5 6V9H7.5" stroke="#888" stroke-width="0.8" fill="none"/>
<text x="12.5" y="13" font-family="Liberation Sans" font-size="11" fill="#333">2h ago</text>
<g transform="translate(47.7,0) scale(0.75)"><path d="M17.65 6.35A7.95 7.95 0 0 0 12 4C7.58 4 4.01 7.58 4.01 12S7.58 20 12 20c3.73 0 6.84-2.55 7.73-6h-2.08A5.99 5.99 0 0 1 12 18c-3.31 0-6-2.69-6-6s2.69-6 6-6c1.66 0 3.14.69 4.22 1.78L13 11h7V4z" fill="#111"/></g>
<path d="M72.7 7.5L78.6 7.5L75.65 10.5Z" fill="#222"/>
</symbol>
</defs></svg>

<!-- SIDEBAR -->
<div class="a side">
  <div class="a" style="left:3px;top:200px;width:37px;height:28px;background:#4b50a6;border-radius:6px"></div>
  <!-- home -->
  <svg style="top:8px" viewBox="0 0 20 20"><path d="M3 10L10 3.5L17 10M5.5 8V16.5H8.5V12H11.5V16.5H14.5V8" fill="none" stroke="#111" stroke-width="2" stroke-linejoin="round"/></svg>
  <!-- search -->
  <svg style="top:40px" viewBox="0 0 20 20"><circle cx="8" cy="8" r="5" fill="none" stroke="#111" stroke-width="2.2"/><path d="M11.5 11.5L17 17" stroke="#111" stroke-width="2.4"/></svg>
  <!-- chart -->
  <svg style="top:73px" viewBox="0 0 20 20"><rect x="2" y="9" width="3.8" height="8" fill="#111"/><rect x="8.1" y="3" width="3.8" height="14" fill="#111"/><rect x="14.2" y="11" width="3.8" height="6" fill="#111"/></svg>
  <!-- hierarchy -->
  <svg style="top:106px" viewBox="0 0 20 20"><rect x="2" y="2.5" width="5" height="4.5" fill="none" stroke="#111" stroke-width="1.8"/><rect x="12" y="3.5" width="5" height="4.5" fill="none" stroke="#111" stroke-width="1.8"/><rect x="12" y="12" width="5" height="4.5" fill="none" stroke="#111" stroke-width="1.8"/><path d="M7 5H12M9.5 5V14H12" fill="none" stroke="#111" stroke-width="1.8"/></svg>
  <!-- devices -->
  <svg style="left:10px;top:138px;width:23px;height:19px" viewBox="0 0 23 19"><path d="M3.5 15V3H20" fill="none" stroke="#111" stroke-width="2.1"/><path d="M0.5 16.3H12" stroke="#111" stroke-width="2.1"/><rect x="14.5" y="7" width="6" height="9.5" fill="none" stroke="#111" stroke-width="2"/></svg>
  <!-- share -->
  <svg style="top:171px" viewBox="0 0 20 20"><circle cx="4" cy="10" r="2.6" fill="none" stroke="#111" stroke-width="2"/><circle cx="15" cy="4" r="2.6" fill="none" stroke="#111" stroke-width="2"/><circle cx="15" cy="16" r="2.6" fill="none" stroke="#111" stroke-width="2"/><path d="M6.2 8.8L12.8 5.2M6.2 11.2L12.8 14.8" stroke="#111" stroke-width="2"/></svg>
  <!-- dashboard active -->
  <svg style="top:204px" viewBox="0 0 20 20"><rect x="2.5" y="2.5" width="6" height="7" fill="none" stroke="#fff" stroke-width="1.8"/><rect x="11.5" y="2.5" width="6" height="4" fill="none" stroke="#fff" stroke-width="1.8"/><rect x="2.5" y="12.5" width="6" height="4.5" fill="none" stroke="#fff" stroke-width="1.8"/><rect x="11.5" y="9.5" width="6" height="7.5" fill="none" stroke="#fff" stroke-width="1.8"/></svg>
  <!-- grid -->
  <svg style="top:236px" viewBox="0 0 20 20"><rect x="2.5" y="2.5" width="15" height="15" rx="1.5" fill="none" stroke="#111" stroke-width="2"/><path d="M10 2.5V17.5M2.5 10H17.5" stroke="#111" stroke-width="2"/></svg>
  <!-- doc -->
  <svg style="top:269px" viewBox="0 0 20 20"><path d="M4 2.5H11.5L16 7V17.5H4Z" fill="none" stroke="#111" stroke-width="2" stroke-linejoin="round"/><path d="M7 11H13M7 14H13" stroke="#111" stroke-width="1.8"/></svg>
  <!-- warning -->
  <svg style="top:302px" viewBox="0 0 20 20"><path d="M10 2.5L18.5 17H1.5Z" fill="none" stroke="#111" stroke-width="1.9" stroke-linejoin="round"/><path d="M10 7.5V12" stroke="#111" stroke-width="1.8"/><circle cx="10" cy="14.3" r="1" fill="#111"/></svg>
  <!-- filter -->
  <svg style="left:9.5px;top:333px;width:23px;height:23px" viewBox="0 0 24 24"><path d="M7 6h10l-5.01 6.3L7 6zm-2.75-.39C6.27 8.2 10 13 10 13v6c0 .55.45 1 1 1h2c.55 0 1-.45 1-1v-6s3.72-4.8 5.74-7.39A.998.998 0 0 0 18.95 4H5.04c-.83 0-1.3.95-.79 1.61z" fill="#111"/></svg>
  <!-- person gear -->
  <svg style="left:11px;top:369px;width:21px;height:19px" viewBox="0 0 21 19"><circle cx="7" cy="4" r="2.9" fill="none" stroke="#111" stroke-width="1.7"/><path d="M1.2 15.6V13.8C1.2 11.3 4 10 7 10C8 10 9 10.1 9.8 10.4" fill="none" stroke="#111" stroke-width="1.7"/><path d="M1.2 15.6H9.2" stroke="#111" stroke-width="1.7"/><g transform="translate(8.6,6.3)"><path d="M10.11,6.24L11.53,6.19L11.53,7.81L10.11,7.76L9.73,8.66L10.77,9.63L9.63,10.77L8.66,9.73L7.76,10.11L7.81,11.53L6.19,11.53L6.24,10.11L5.34,9.73L4.37,10.77L3.23,9.63L4.27,8.66L3.89,7.76L2.47,7.81L2.47,6.19L3.89,6.24L4.27,5.34L3.23,4.37L4.37,3.23L5.34,4.27L6.24,3.89L6.19,2.47L7.81,2.47L7.76,3.89L8.66,4.27L9.63,3.23L10.77,4.37L9.73,5.34Z" fill="none" stroke="#111" stroke-width="1.5" stroke-linejoin="round"/></g></svg>
  <!-- gear question -->
  <svg style="left:9px;top:397px;width:24px;height:24px" viewBox="0 0 24 24"><path d="M19.77,10.11L22.43,10.14L22.43,13.86L19.77,13.89L18.83,16.16L20.70,18.06L18.06,20.70L16.16,18.83L13.89,19.77L13.86,22.43L10.14,22.43L10.11,19.77L7.84,18.83L5.94,20.70L3.30,18.06L5.17,16.16L4.23,13.89L1.57,13.86L1.57,10.14L4.23,10.11L5.17,7.84L3.30,5.94L5.94,3.30L7.84,5.17L10.11,4.23L10.14,1.57L13.86,1.57L13.89,4.23L16.16,5.17L18.06,3.30L20.70,5.94L18.83,7.84Z" fill="none" stroke="#111" stroke-width="1.7" stroke-linejoin="round"/><circle cx="12" cy="12" r="4.6" fill="none" stroke="#111" stroke-width="1.3"/><path d="M10.4 10.9C10.4 9.9 11.1 9.4 12 9.4C12.9 9.4 13.6 10 13.6 10.8C13.6 11.8 12 11.9 12 13.1" fill="none" stroke="#111" stroke-width="1.1"/><circle cx="12" cy="14.5" r="0.65" fill="#111"/></svg>
  <!-- slack -->
  <svg style="left:11px;top:431px;width:20px;height:20px" viewBox="0 0 20 20"><g stroke="#111" stroke-width="3.4" stroke-linecap="round"><path d="M7.8 2.2V8.6M12.2 11.4V17.8M2.2 12.2H8.6M11.4 7.8H17.8"/></g><g fill="#111"><circle cx="3.2" cy="7.8" r="1.7"/><circle cx="12.2" cy="3.2" r="1.7"/><circle cx="16.8" cy="12.2" r="1.7"/><circle cx="7.8" cy="16.8" r="1.7"/></g></svg>
  <!-- list -->
  <svg style="top:464px" viewBox="0 0 20 20"><g fill="#111"><circle cx="3" cy="4.5" r="1.3"/><circle cx="3" cy="10" r="1.3"/><circle cx="3" cy="15.5" r="1.3"/></g><path d="M6.5 4.5H18M6.5 10H18M6.5 15.5H18" stroke="#111" stroke-width="2"/></svg>
</div>

<!-- TOP BAR -->
<div class="a top"></div>
<div class="btn" style="left:52px;width:29px">
  <svg style="left:7px;top:5px" width="14" height="18" viewBox="0 0 14 18"><path d="M10.5 2L3.5 9L10.5 16" fill="none" stroke="#111" stroke-width="2.2"/></svg>
</div>
<div class="a" style="left:96.5px;top:7px;font-size:19px;color:#4b55a3">Prod</div>
<svg class="a" style="left:149px;top:12px" width="8" height="10" viewBox="0 0 8 10"><path d="M2 1.2L5.8 5L2 8.8" fill="none" stroke="#8a8a96" stroke-width="1.5"/></svg>
<div class="a" style="left:170px;top:7px;font-size:19px;color:#151515">Microsoft_1E</div>
<svg class="a" style="left:61px;top:38px" width="22" height="18" viewBox="0 0 22 18"><path d="M1.5 1.5H15.5L10 8.5V15L7 13.5V8.5Z" fill="none" stroke="#111" stroke-width="1.9" stroke-linejoin="round"/><path d="M16.5 9.5V17M12.8 13.2H20.2" stroke="#111" stroke-width="1.9"/></svg>

<div class="btn" style="left:1049px;width:30px"><svg style="left:7px;top:6px" width="15" height="15" viewBox="0 0 15 15"><path d="M7.5 2V13M2 7.5H13" stroke="#111" stroke-width="1.6"/></svg></div>
<div class="btn" style="left:1087px;width:139px;background:#d6d9ea;border-color:#d0d3e3">
  <svg style="left:5px;top:5px" width="18" height="18" viewBox="0 0 18 18"><circle cx="9" cy="9" r="7.2" fill="none" stroke="#111" stroke-width="1.6"/><path d="M9 4.5V9.3L12 11.3" fill="none" stroke="#111" stroke-width="1.6"/></svg>
  <div class="a" style="left:34px;top:7px;font-size:11.3px;color:#1a1a1a">Past 1 Weeks</div>
  <svg style="left:119px;top:11px" width="10" height="6" viewBox="0 0 10 6"><path d="M0.5 0.5H9.5L5 5.5Z" fill="#111"/></svg>
</div>
<div class="btn" style="left:1234px;width:91px">
  <svg style="left:5px;top:4px" width="20" height="20" viewBox="0 0 20 20"><path d="M16.8 8.5A7.2 7.2 0 1 1 13.5 3.5" fill="none" stroke="#111" stroke-width="1.9"/><path d="M12 0.8L17.5 2.2L15 6.8Z" fill="#111"/><path d="M10 6V10.5L12.8 12.3" fill="none" stroke="#111" stroke-width="1.7"/></svg>
  <div class="a" style="left:37px;top:6px;font-size:13px;color:#1a1a1a">Off</div>
  <svg style="left:69px;top:11px" width="10" height="6" viewBox="0 0 10 6"><path d="M0.5 0.5H9.5L5 5.5Z" fill="#111"/></svg>
</div>
<div class="btn" style="left:1333px;width:30px"><svg style="left:5px;top:4px" width="20" height="20" viewBox="0 0 24 24"><path d="M17.65 6.35A7.95 7.95 0 0 0 12 4C7.58 4 4.01 7.58 4.01 12S7.58 20 12 20c3.73 0 6.84-2.55 7.73-6h-2.08A5.99 5.99 0 0 1 12 18c-3.31 0-6-2.69-6-6s2.69-6 6-6c1.66 0 3.14.69 4.22 1.78L13 11h7V4z" fill="#111"/></svg></div>
<div class="btn" style="left:1371px;width:31px"><svg style="left:8px;top:6px" width="14" height="16" viewBox="0 0 14 16"><path d="M5 1.5H9V6.5H12L7 11.5L2 6.5H5Z" fill="#111"/><rect x="1.5" y="13" width="11" height="1.8" fill="#111"/></svg></div>
<div class="btn" style="left:1409px;width:31px"><svg style="left:7px;top:6px" width="16" height="16" viewBox="0 0 16 16"><circle cx="3.5" cy="8" r="2" fill="#111"/><circle cx="12" cy="3" r="2" fill="#111"/><circle cx="12" cy="13" r="2" fill="#111"/><path d="M3.5 8L12 3M3.5 8L12 13" stroke="#111" stroke-width="1.6"/></svg></div>
<div class="btn" style="left:1447px;width:31px"><svg style="left:8px;top:7px" width="14" height="14" viewBox="0 0 14 14"><circle cx="7" cy="7" r="4.3" fill="none" stroke="#111" stroke-width="3"/><circle cx="7" cy="7" r="5.8" fill="none" stroke="#111" stroke-width="2.6" stroke-dasharray="2.3 2.25"/></svg></div>
<div class="btn" style="left:1486px;width:31px"><svg style="left:7px;top:7px" width="16" height="14" viewBox="0 0 16 14"><rect x="4" y="0.8" width="8" height="3" fill="#111"/><rect x="1" y="4.5" width="14" height="6" rx="1.5" fill="#111"/><rect x="4" y="8.5" width="8" height="4.5" fill="#fdfcff" stroke="#111" stroke-width="1.5"/></svg></div>
<div class="btn" style="left:1524px;width:31px"><svg style="left:9px;top:8px" width="12" height="12" viewBox="0 0 12 12"><path d="M1 4V1H4M8 1H11V4M11 8V11H8M4 11H1V8" fill="none" stroke="#111" stroke-width="1.6"/></svg></div>
<div class="btn" style="left:1562px;width:31px"><svg style="left:9px;top:6px" width="13" height="16" viewBox="0 0 13 16"><path d="M1.5 1.5H8L11.5 5V14.5H1.5Z" fill="none" stroke="#111" stroke-width="1.7" stroke-linejoin="round"/><path d="M4 9H9M4 11.5H9" stroke="#111" stroke-width="1.3"/></svg></div>

<svg class="a" style="left:794px;top:62px" width="18" height="22" viewBox="794 62 18 22"><path d="M799.2 65.5L799.4 75.8L801.7 73.7L803.5 79.2L805.8 78.3L803.9 73.1L807.4 73Z" fill="#000" stroke="#fff" stroke-width="1.6" stroke-linejoin="round" paint-order="stroke"/></svg>
<!-- TABS -->
<div class="a" style="left:63px;top:84px;font-size:13px;letter-spacing:0.18px;color:#2a2a2a">Signin Activity</div>
<div class="a" style="left:177px;top:84px;font-size:13px;color:#4b55a3">Non-Interactive SignIns</div>
<div class="a" style="left:343px;top:84px;font-size:13px;color:#2a2a2a">GraphAPI</div>
<div class="a" style="left:162px;top:107px;width:166px;height:2px;background:#4b50b0"></div>

<div class="panel" style="left:52px;top:113px;width:768px;height:279px"></div>
<svg class="a" style="left:60px;top:120px" width="6" height="8.5"><use href="#grip" fill="#111"/></svg>
<div class="a ptitle" style="left:77px;top:117px">Caller IP Heat Map</div>
<svg class="a" style="left:732px;top:116px" width="80" height="18"><use href="#ago"/></svg>
<svg class="a" style="left:57px;top:140px" width="758" height="248" viewBox="0 0 758 248"><use href="#world"/><circle cx="395.3" cy="49.5" r="5.8" fill="#5b86c4" fill-opacity="0.9"/><circle cx="394.6" cy="53.7" r="2.2" fill="#2d3f97" fill-opacity="1"/><circle cx="430.9" cy="81.4" r="2.6" fill="#2f4199" fill-opacity="1"/><circle cx="451.4" cy="94.3" r="1.6" fill="#2f4199" fill-opacity="1"/><circle cx="393.8" cy="115.6" r="2.2" fill="#3550a3" fill-opacity="1"/><circle cx="388.2" cy="120.5" r="1.1" fill="#2f4199" fill-opacity="1"/><circle cx="435.6" cy="134.1" r="2.6" fill="#3550a3" fill-opacity="1"/><circle cx="476.4" cy="86.8" r="5.2" fill="#5b86c4" fill-opacity="0.95"/><circle cx="485.9" cy="88.6" r="1.9" fill="#3550a3" fill-opacity="1"/><circle cx="493.1" cy="92.4" r="1.3" fill="#2f4199" fill-opacity="1"/><circle cx="487.7" cy="105.6" r="7.6" fill="#5f8cc6" fill-opacity="0.95"/><circle cx="480.2" cy="102.6" r="2.8" fill="#3d5fae" fill-opacity="1"/><circle cx="493.4" cy="104.7" r="2.5" fill="#3d5fae" fill-opacity="1"/><circle cx="489.2" cy="111.1" r="4.5" fill="#3f63b0" fill-opacity="1"/><circle cx="485.5" cy="115.2" r="1.5" fill="#2f4199" fill-opacity="1"/><circle cx="543.3" cy="108.1" r="7.6" fill="#5f8cc6" fill-opacity="0.95"/><circle cx="544" cy="105.1" r="4.6" fill="#3f63b0" fill-opacity="1"/><circle cx="281.3" cy="144.4" r="5.0" fill="#4a72b8" fill-opacity="1"/><circle cx="309.2" cy="178" r="7.7" fill="#5f93ce" fill-opacity="0.95"/><circle cx="309.2" cy="178" r="1" fill="#2f4199" fill-opacity="1"/><circle cx="293" cy="172.3" r="1.4" fill="#2f4199" fill-opacity="1"/><circle cx="255.7" cy="83.2" r="46.5" fill="#a3283d"/><circle cx="276" cy="91" r="35" fill="#ee9160"/><clipPath id="cr1"><circle cx="255.7" cy="83.2" r="46.5"/></clipPath><circle cx="276" cy="91" r="35" fill="#e36a3d" clip-path="url(#cr1)"/><circle cx="273" cy="81.4" r="25.7" fill="#fdd08a"/><circle cx="261" cy="82" r="20" fill="#f7eba6"/><circle cx="253" cy="83" r="18.5" fill="#e4ecf0"/><circle cx="238.4" cy="87.8" r="14.5" fill="#c6c7de"/><circle cx="254.3" cy="83.2" r="11" fill="#93c1dc"/><circle cx="272.8" cy="80.4" r="12.1" fill="#a6cfe0"/><circle cx="255.9" cy="82.7" r="4.3" fill="#2b3f9a"/><circle cx="237.2" cy="88.4" r="5" fill="#3d68b0"/><circle cx="274.6" cy="89.7" r="3" fill="#2e4fa0"/><circle cx="221.5" cy="58.3" r="6" fill="#4468b3"/><circle cx="222.7" cy="75.6" r="6" fill="#4468b3"/></svg>
<div class="a" style="left:67px;top:150px;width:31px;height:59px;border:2px solid #a9a9ad;border-radius:4px;background:#fdfcfe"></div><div class="a" style="left:69px;top:178.5px;width:27px;height:1.5px;background:#d2d2d4"></div><svg class="a" style="left:76px;top:161px" width="14" height="14"><path d="M7 1V13M1 7H13" stroke="#111" stroke-width="2.4"/></svg><svg class="a" style="left:76px;top:188.5px" width="14" height="14"><path d="M1 7H13" stroke="#111" stroke-width="2.4"/></svg><div class="a" style="left:68px;top:365px;width:13px;height:13px;border-radius:50%;background:#c0402e"></div><div class="a" style="left:90px;top:366px;font-size:11px;color:#333">Layer 1</div><div class="a" style="left:787px;top:212px;font-size:11px;color:#333">High</div><div class="a" style="left:751px;top:227px;font-size:11px;color:#333">2540</div><div class="a" style="left:771px;top:356px;font-size:11px;color:#333">1</div><div class="a" style="left:789px;top:234px;width:19px;height:128px;background:linear-gradient(#b2182b 0%,#d73027 14%,#f46d43 27%,#fdae61 38%,#fee090 48%,#f0f4d8 56%,#e0f3f8 61%,#abd9e9 69%,#74add1 78%,#4575b4 88%,#313695 100%)"></div><div class="a" style="left:788px;top:229px;width:22px;height:6px;border-radius:3px;background:#9e1a2c"></div><div class="a" style="left:788px;top:359px;width:22px;height:7px;border-radius:3.5px;background:#2b3183;border:1px solid #c8c8e8"></div><div class="a" style="left:596px;top:371px;width:219px;height:17px;background:rgba(255,255,255,0.8)"></div><svg class="a" style="left:599px;top:376px" width="12" height="8"><rect x="0" y="0" width="12" height="4" fill="#4c7be1"/><rect x="0" y="4" width="12" height="4" fill="#ffd500"/></svg><div class="a" style="left:613px;top:373px;font-size:11.3px;color:#333;white-space:nowrap"><span style="color:#0078a8">Leaflet</span> | © <span style="color:#0078a8">OpenStreetMap</span> contributors</div><svg class="a" style="left:812px;top:384px" width="6" height="6"><path d="M5.5 0V5.5H0" fill="none" stroke="#999" stroke-width="1"/></svg><div class="panel" style="left:825px;top:113px;width:768px;height:279px"></div>
<svg class="a" style="left:833px;top:120px" width="6" height="8.5"><use href="#grip" fill="#111"/></svg>
<div class="a ptitle" style="left:850px;top:117px">Users Heat Map</div>
<svg class="a" style="left:1505px;top:116px" width="80" height="18"><use href="#ago"/></svg>
<svg class="a" style="left:830px;top:140px" width="758" height="248" viewBox="0 0 758 248"><use href="#world"/><circle cx="395.3" cy="49.5" r="5.8" fill="#5b86c4" fill-opacity="0.9"/><circle cx="394.6" cy="53.7" r="2.2" fill="#2d3f97" fill-opacity="1"/><circle cx="430.9" cy="81.4" r="2.6" fill="#2f4199" fill-opacity="1"/><circle cx="451.4" cy="94.3" r="1.6" fill="#2f4199" fill-opacity="1"/><circle cx="393.8" cy="115.6" r="2.2" fill="#3550a3" fill-opacity="1"/><circle cx="388.2" cy="120.5" r="1.1" fill="#2f4199" fill-opacity="1"/><circle cx="435.6" cy="134.1" r="2.6" fill="#3550a3" fill-opacity="1"/><circle cx="476.4" cy="86.8" r="5.2" fill="#5b86c4" fill-opacity="0.95"/><circle cx="485.9" cy="88.6" r="1.9" fill="#3550a3" fill-opacity="1"/><circle cx="493.1" cy="92.4" r="1.3" fill="#2f4199" fill-opacity="1"/><circle cx="487.7" cy="105.6" r="7.6" fill="#5f8cc6" fill-opacity="0.95"/><circle cx="480.2" cy="102.6" r="2.8" fill="#3d5fae" fill-opacity="1"/><circle cx="493.4" cy="104.7" r="2.5" fill="#3d5fae" fill-opacity="1"/><circle cx="489.2" cy="111.1" r="4.5" fill="#3f63b0" fill-opacity="1"/><circle cx="485.5" cy="115.2" r="1.5" fill="#2f4199" fill-opacity="1"/><circle cx="543.3" cy="108.1" r="7.6" fill="#5f8cc6" fill-opacity="0.95"/><circle cx="544" cy="105.1" r="4.6" fill="#3f63b0" fill-opacity="1"/><circle cx="281.3" cy="144.4" r="5.0" fill="#4a72b8" fill-opacity="1"/><circle cx="309.2" cy="178" r="7.7" fill="#5f93ce" fill-opacity="0.95"/><circle cx="309.2" cy="178" r="1" fill="#2f4199" fill-opacity="1"/><circle cx="293" cy="172.3" r="1.4" fill="#2f4199" fill-opacity="1"/><circle cx="255.2" cy="83.1" r="46.2" fill="#a3283d"/><circle cx="275" cy="90" r="35.4" fill="#ee9160"/><clipPath id="cr2"><circle cx="255.2" cy="83.1" r="46.2"/></clipPath><circle cx="275" cy="90" r="35.4" fill="#e5683e" clip-path="url(#cr2)"/><circle cx="237.7" cy="87.9" r="14.4" fill="#c3c6df"/><circle cx="254.6" cy="82.5" r="13.9" fill="#b7d3e3" fill-opacity="0.9"/><circle cx="264.8" cy="83.4" r="5.5" fill="#4f7bbd"/><circle cx="255.2" cy="83.4" r="3.6" fill="#3a52a6"/><circle cx="257.1" cy="68.1" r="4.5" fill="#5578bd"/><circle cx="281.9" cy="72.6" r="4" fill="#4b6db8"/><circle cx="277.5" cy="68.1" r="1.5" fill="#3a52a6"/><circle cx="267.3" cy="67.5" r="1.5" fill="#3a52a6"/><circle cx="220.9" cy="58" r="5" fill="#8f2336"/><circle cx="222.8" cy="75.1" r="5" fill="#8f2336"/></svg>
<div class="a" style="left:840px;top:150px;width:31px;height:59px;border:2px solid #a9a9ad;border-radius:4px;background:#fdfcfe"></div><div class="a" style="left:842px;top:178.5px;width:27px;height:1.5px;background:#d2d2d4"></div><svg class="a" style="left:849px;top:161px" width="14" height="14"><path d="M7 1V13M1 7H13" stroke="#111" stroke-width="2.4"/></svg><svg class="a" style="left:849px;top:188.5px" width="14" height="14"><path d="M1 7H13" stroke="#111" stroke-width="2.4"/></svg><div class="a" style="left:841px;top:365px;width:13px;height:13px;border-radius:50%;background:#c0402e"></div><div class="a" style="left:863px;top:366px;font-size:11px;color:#333">Layer 1</div><div class="a" style="left:1560px;top:212px;font-size:11px;color:#333">High</div><div class="a" style="left:1524px;top:227px;font-size:11px;color:#333">2540</div><div class="a" style="left:1544px;top:356px;font-size:11px;color:#333">1</div><div class="a" style="left:1562px;top:234px;width:19px;height:128px;background:linear-gradient(#b2182b 0%,#d73027 14%,#f46d43 27%,#fdae61 38%,#fee090 48%,#f0f4d8 56%,#e0f3f8 61%,#abd9e9 69%,#74add1 78%,#4575b4 88%,#313695 100%)"></div><div class="a" style="left:1561px;top:229px;width:22px;height:6px;border-radius:3px;background:#9e1a2c"></div><div class="a" style="left:1561px;top:359px;width:22px;height:7px;border-radius:3.5px;background:#2b3183;border:1px solid #c8c8e8"></div><div class="a" style="left:1369px;top:371px;width:219px;height:17px;background:rgba(255,255,255,0.8)"></div><svg class="a" style="left:1372px;top:376px" width="12" height="8"><rect x="0" y="0" width="12" height="4" fill="#4c7be1"/><rect x="0" y="4" width="12" height="4" fill="#ffd500"/></svg><div class="a" style="left:1386px;top:373px;font-size:11.3px;color:#333;white-space:nowrap"><span style="color:#0078a8">Leaflet</span> | © <span style="color:#0078a8">OpenStreetMap</span> contributors</div><svg class="a" style="left:1585px;top:384px" width="6" height="6"><path d="M5.5 0V5.5H0" fill="none" stroke="#999" stroke-width="1"/></svg><div class="panel" style="left:52px;top:397px;width:768px;height:280px"></div>
<svg class="a" style="left:60px;top:404px" width="6" height="8.5"><use href="#grip" fill="#111"/></svg>
<div class="a ptitle" style="left:77px;top:401px">Countries NI</div>
<svg class="a" style="left:732px;top:400px" width="80" height="18"><use href="#ago"/></svg>
<div class="th" style="left:204px;width:400px;text-align:center;top:427px;">Location</div>
<div class="th" style="right:796px;top:427px;">Location</div>
<div class="hl" style="left:53px;top:445px;width:761px"></div>
<div class="a" style="left:53px;top:447px;width:761px;height:198px;overflow:hidden"><div class="t" style="left:14px;top:5.0px">IN</div><div class="t" style="right:15px;top:5.0px">2K</div><div class="hl" style="left:0;top:24.0px;width:761px"></div><div class="t" style="left:14px;top:31.4px">LB</div><div class="t" style="right:15px;top:31.4px">466</div><div class="hl" style="left:0;top:50.4px;width:761px"></div><div class="t" style="left:14px;top:57.9px">PK</div><div class="t" style="right:15px;top:57.9px">433</div><div class="hl" style="left:0;top:76.9px;width:761px"></div><div class="t" style="left:14px;top:84.4px">AR</div><div class="t" style="right:15px;top:84.4px">115</div><div class="hl" style="left:0;top:103.4px;width:761px"></div><div class="t" style="left:14px;top:110.8px">DE</div><div class="t" style="right:15px;top:110.8px">771</div><div class="hl" style="left:0;top:129.8px;width:761px"></div><div class="t" style="left:14px;top:137.2px">NG</div><div class="t" style="right:15px;top:137.2px">146</div><div class="hl" style="left:0;top:156.2px;width:761px"></div><div class="t" style="left:14px;top:163.7px">UY</div><div class="t" style="right:15px;top:163.7px">578</div><div class="hl" style="left:0;top:182.7px;width:761px"></div><div class="t" style="left:14px;top:190.1px">FR</div><div class="t" style="right:15px;top:190.1px">7</div></div>
<div class="hl" style="left:53px;top:645px;width:761px"></div>
<div class="t" style="right:789px;top:655px;">1-17 of 17</div>
<div class="a" style="left:814px;top:421px;width:6px;height:224px;background:#b9bbe0"></div><div class="a" style="left:814px;top:421px;width:6px;height:107px;background:#4a4fa5;border-radius:3px 3px 0 0"></div><svg class="a" style="left:812px;top:669px" width="6" height="6"><path d="M5.5 0V5.5H0" fill="none" stroke="#999" stroke-width="1"/></svg><div class="panel" style="left:825px;top:397px;width:768px;height:280px"></div>
<svg class="a" style="left:833px;top:404px" width="6" height="8.5"><use href="#grip" fill="#111"/></svg>
<div class="a ptitle" style="left:850px;top:401px">Apps Users Signing In NI</div>
<svg class="a" style="left:1505px;top:400px" width="80" height="18"><use href="#ago"/></svg>
<div class="th" style="right:485px;top:427px;">Properties Appdisplayname</div>
<div class="th" style="left:1125px;top:427px;">Properties Userprincipalname</div>
<div class="th" style="right:23px;top:427px;">Properties Appdisplayname</div>
<div class="hl" style="left:826px;top:445px;width:761px"></div>
<div class="a" style="left:826px;top:447px;width:761px;height:198px;overflow:hidden"><div class="t" style="left:15px;top:5.0px">Outlook Mobile</div><div class="t" style="left:299px;top:5.0px">ken.dewitt@onengine.ai</div><div class="t" style="right:15px;top:5.0px">110</div><div class="hl" style="left:0;top:24.0px;width:761px"></div><div class="t" style="left:15px;top:31.4px">Microsoft Application Command Service</div><div class="t" style="left:299px;top:31.4px">antonio.reyes@onengine.ai</div><div class="t" style="right:15px;top:31.4px">51</div><div class="hl" style="left:0;top:50.4px;width:761px"></div><div class="t" style="left:15px;top:57.9px">Outlook Mobile</div><div class="t" style="left:299px;top:57.9px">kimberly.hopson@onengine.ai</div><div class="t" style="right:15px;top:57.9px">38</div><div class="hl" style="left:0;top:76.9px;width:761px"></div><div class="t" style="left:15px;top:84.4px">Zoom</div><div class="t" style="left:299px;top:84.4px">deepa.bhat@onengine.ai</div><div class="t" style="right:15px;top:84.4px">24</div><div class="hl" style="left:0;top:103.4px;width:761px"></div><div class="t" style="left:15px;top:110.8px">Graph Files Manager</div><div class="t" style="left:299px;top:110.8px">sammy@onengine.ai</div><div class="t" style="right:15px;top:110.8px">1K</div><div class="hl" style="left:0;top:129.8px;width:761px"></div><div class="t" style="left:15px;top:137.2px">Apple Internet Accounts</div><div class="t" style="left:299px;top:137.2px">michelle.cheney@onengine.ai</div><div class="t" style="right:15px;top:137.2px">111</div><div class="hl" style="left:0;top:156.2px;width:761px"></div><div class="t" style="left:15px;top:163.7px">Graph Files Manager</div><div class="t" style="left:299px;top:163.7px">om.singh@fmsearch.com</div><div class="t" style="right:15px;top:163.7px">569</div><div class="hl" style="left:0;top:182.7px;width:761px"></div><div class="t" style="left:15px;top:190.1px">Outlook Mobile</div><div class="t" style="left:299px;top:190.1px">jeff.mcdonald@onengine.ai</div><div class="t" style="right:15px;top:190.1px">93</div></div>
<div class="hl" style="left:826px;top:645px;width:761px"></div>
<div class="t" style="right:15px;top:655px;">1-799 of 799</div>
<div class="a" style="left:1587px;top:421px;width:6px;height:224px;background:#b9bbe0"></div><div class="a" style="left:1587px;top:421px;width:6px;height:15px;background:#4a4fa5;border-radius:3px 3px 0 0"></div><svg class="a" style="left:1585px;top:669px" width="6" height="6"><path d="M5.5 0V5.5H0" fill="none" stroke="#999" stroke-width="1"/></svg><div class="panel" style="left:52px;top:682px;width:768px;height:200px"></div>
<svg class="a" style="left:60px;top:689px" width="6" height="8.5"><use href="#grip" fill="#111"/></svg>
<div class="a ptitle" style="left:77px;top:686px">Apps ObjectIDs NI</div>
<svg class="a" style="left:732px;top:685px" width="80" height="18"><use href="#ago"/></svg>
<div class="th" style="left:67px;top:711px;">Properties Appdisplayname</div>
<div class="th" style="left:422px;top:711px;">Properties Appid</div>
<div class="hl" style="left:53px;top:730px;width:761px"></div>
<div class="t" style="left:67px;top:737.0px;">Microsoft Edge Enterprise New Tab Page</div>
<div class="t" style="left:422px;top:737.0px;letter-spacing:0.44px">d7b530a4-7680-4c23-a8bf-c52c121d2e87</div>
<div class="hl" style="left:53px;top:756px;width:761px"></div>
<div class="t" style="left:67px;top:763.5px;">Loxo</div>
<div class="t" style="left:422px;top:763.5px;letter-spacing:0.44px">4954ce8e-bde6-4c3c-a0e4-4e6065e6d61c</div>
<div class="hl" style="left:53px;top:783px;width:761px"></div>
<div class="t" style="left:67px;top:790.0px;">Universal Store Native Client</div>
<div class="t" style="left:422px;top:790.0px;letter-spacing:0.44px">268761a2-03f3-40df-8a8b-c3db24145b6b</div>
<div class="hl" style="left:53px;top:809px;width:761px"></div>
<div class="t" style="left:67px;top:816.5px;">Bing</div>
<div class="t" style="left:422px;top:816.5px;letter-spacing:0.44px">9ea1ad79-fdb6-4f9a-8bc3-2b70f96e34c7</div>
<div class="hl" style="left:53px;top:836px;width:761px"></div>
<div class="t" style="left:67px;top:843.0px;">Windows Search</div>
<div class="t" style="left:422px;top:843.0px;letter-spacing:0.44px">26a7ee05-5602-4d76-a7ba-eae8b7b67941</div>
<div class="hl" style="left:53px;top:862px;width:761px"></div>
<div class="a" style="left:814px;top:705px;width:6px;height:160px;background:#b9bbe0"></div><div class="a" style="left:814px;top:705px;width:6px;height:21px;background:#4a4fa5;border-radius:3px 3px 0 0"></div><div class="panel" style="left:825px;top:682px;width:768px;height:200px"></div>
<svg class="a" style="left:833px;top:689px" width="6" height="8.5"><use href="#grip" fill="#111"/></svg>
<div class="a ptitle" style="left:850px;top:686px">Conditional Access Engaged NI</div>
<svg class="a" style="left:1505px;top:685px" width="80" height="18"><use href="#ago"/></svg>
<div class="hl" style="left:826px;top:730px;width:767px"></div>
<div class="a" style="left:826px;top:731px;width:766px;height:60px;overflow:hidden"><div class="t" style="left:15px;top:7.0px;letter-spacing:0.13px">[{&quot;conditionsNotSatisfied&quot;:0,&quot;conditionsSatisfied&quot;:3,&quot;displayName&quot;:&quot;Security Defaults&quot;,&quot;enforcedGrantControls&quot;:[],&quot;enforcedSessionControls&quot;:[],&quot;id&quot;:&quot;x&quot;}]</div><div class="t" style="left:15px;top:33.4px;letter-spacing:0.13px">[{&quot;conditionsNotSatisfied&quot;:0,&quot;conditionsSatisfied&quot;:3,&quot;displayName&quot;:&quot;Security Defaults&quot;,&quot;enforcedGrantControls&quot;:[&quot;Mfa&quot;],&quot;enforcedSessionControls&quot;:[],&quot;id&quot;:&quot;x&quot;}]</div></div>
<div class="hl" style="left:826px;top:757px;width:767px"></div>
<div class="hl" style="left:826px;top:783px;width:767px"></div>

</body></html>
